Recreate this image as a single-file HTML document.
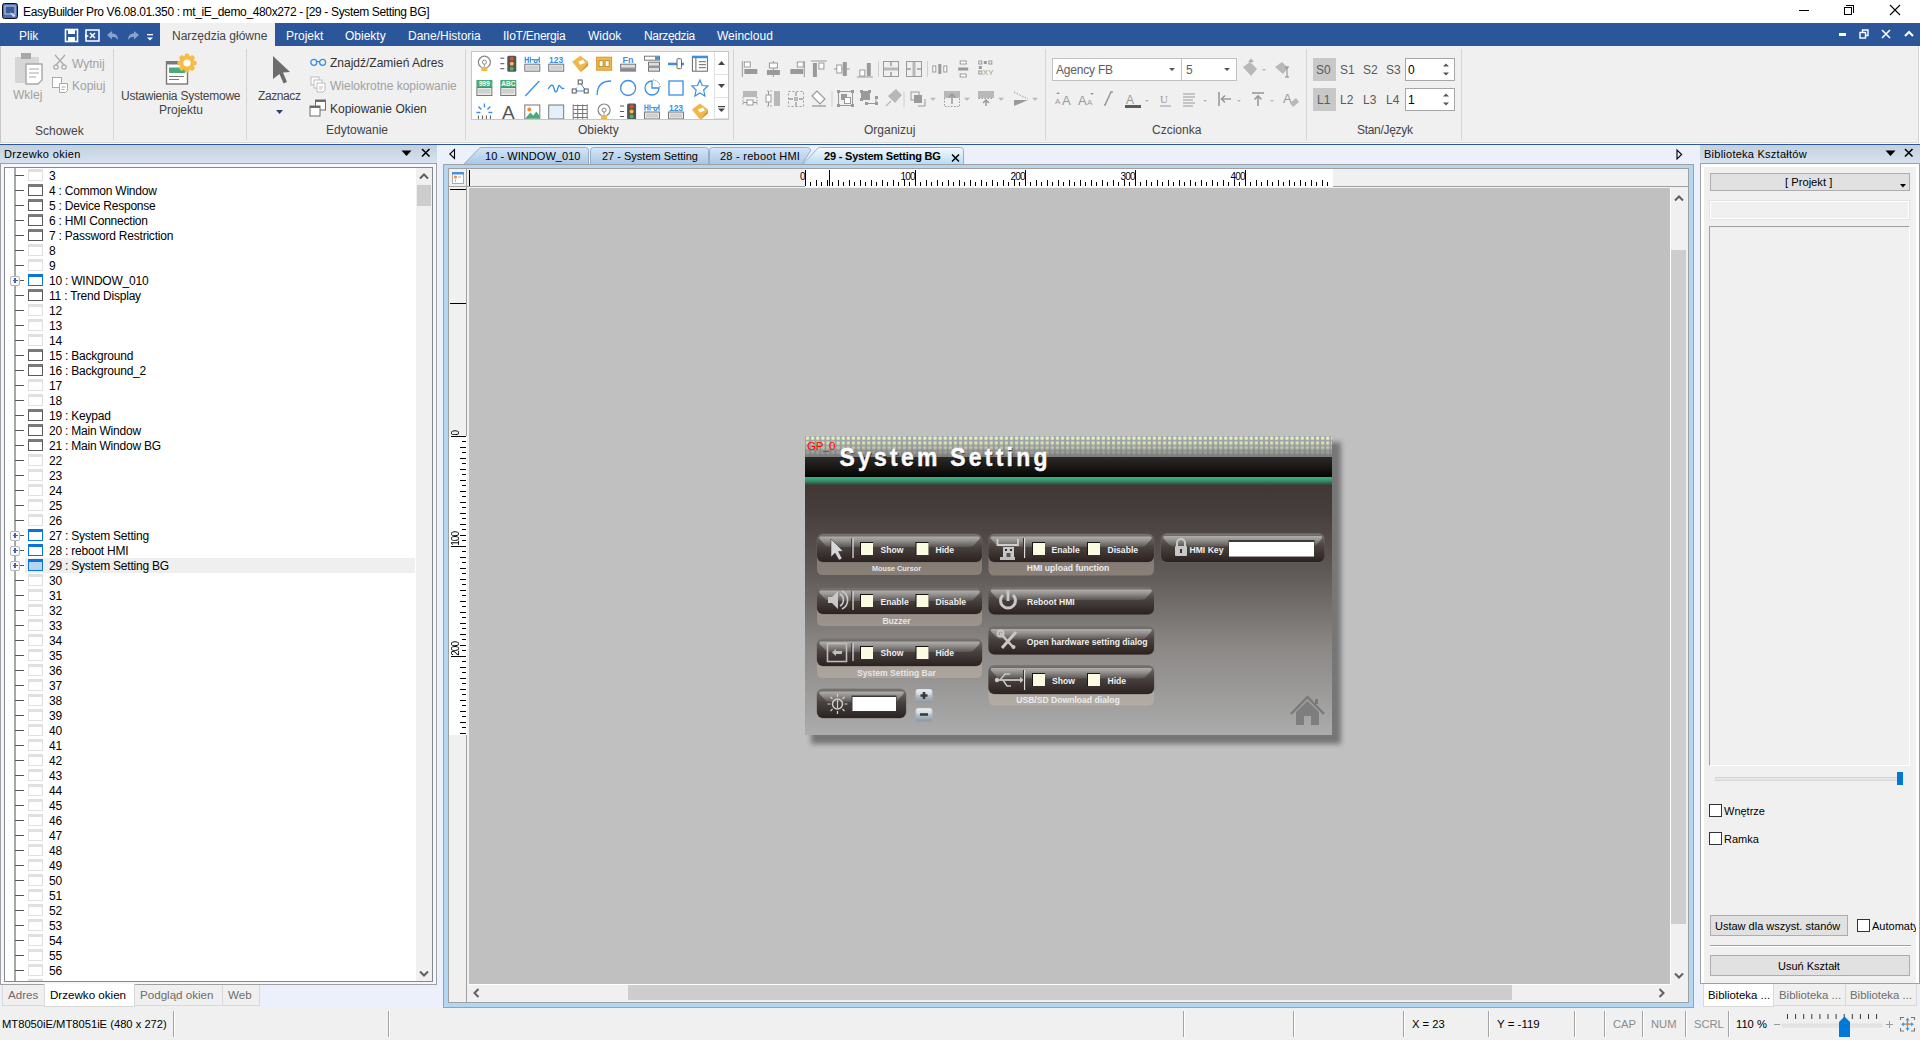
<!DOCTYPE html>
<html><head><meta charset="utf-8">
<style>
*{box-sizing:border-box;margin:0;padding:0}
html,body{width:1922px;height:1040px;overflow:hidden;background:#fff;font-family:"Liberation Sans",sans-serif;font-size:12px;color:#000;position:relative}
.a{position:absolute}
.t{position:absolute;white-space:nowrap;line-height:14px;font-size:12px}
svg{overflow:visible}
</style></head><body>
<!-- ===== TITLE BAR ===== -->
<div class="a" style="left:0;top:0;width:1922px;height:23px;background:#fff"></div>
<svg class="a" style="left:2px;top:3px" width="17" height="17" viewBox="0 0 17 17"><rect x="0.5" y="0.5" width="15" height="15" rx="2" fill="#4a6db0" stroke="#111"/><rect x="3" y="3" width="10" height="8" fill="#3a5a9a" stroke="#c8d0e0" stroke-width="1"/><path d="M8 9 L14 13 L11 14 Z" fill="#dde"/></svg>
<div class="t" style="left:23px;top:5px;font-size:12px;letter-spacing:-0.36px;color:#000">EasyBuilder Pro V6.08.01.350 : mt_iE_demo_480x272 - [29 - System Setting BG]</div>
<div class="a" style="left:1799px;top:10px;width:10px;height:1px;background:#000"></div>
<div class="a" style="left:1844px;top:7px;width:8px;height:8px;border:1px solid #000"></div>
<div class="a" style="left:1846px;top:5px;width:8px;height:8px;border-top:1px solid #000;border-right:1px solid #000"></div>
<svg class="a" style="left:1889px;top:4px" width="12" height="12"><path d="M1 1L11 11M11 1L1 11" stroke="#000" stroke-width="1.1"/></svg>
<!-- ===== MENU BAR ===== -->
<div class="a" style="left:0;top:23px;width:1920px;height:23px;background:#2b579a"></div>
<div class="a" style="left:160px;top:23px;width:115px;height:24px;background:#f0f0f0"></div>
<div class="t" style="left:19px;top:29px;color:#fff">Plik</div>
<svg class="a" style="left:65px;top:29px" width="13" height="13"><rect x="0.5" y="0.5" width="12" height="12" fill="none" stroke="#fff" stroke-width="1.6"/><rect x="3" y="1" width="7" height="4" fill="#fff"/><rect x="3" y="8" width="7" height="4" fill="#fff"/></svg>
<svg class="a" style="left:85px;top:29px" width="15" height="13"><rect x="1" y="1" width="13" height="11" fill="none" stroke="#fff" stroke-width="1.5"/><path d="M5 4L10 9M10 4L5 9" stroke="#fff" stroke-width="1.5"/><path d="M0 5L4 7L0 9Z" fill="#fff"/></svg>
<svg class="a" style="left:106px;top:30px" width="13" height="11"><path d="M1 5L6 1V3.5C10 3.5 12 6 12 10C10.5 7.5 9 7 6 7V9.5Z" fill="#8aa3cc"/></svg>
<svg class="a" style="left:127px;top:30px" width="13" height="11"><path d="M12 5L7 1V3.5C3 3.5 1 6 1 10C2.5 7.5 4 7 7 7V9.5Z" fill="#8aa3cc"/></svg>
<svg class="a" style="left:147px;top:33px" width="7" height="9"><rect x="0" y="1" width="6" height="1.3" fill="#fff"/><path d="M0 4.5H6L3 7.5Z" fill="#fff"/></svg>
<div class="t" style="left:172px;top:29px;color:#444">Narzędzia główne</div>
<div class="t" style="left:286px;top:29px;color:#fff">Projekt</div>
<div class="t" style="left:345px;top:29px;color:#fff">Obiekty</div>
<div class="t" style="left:408px;top:29px;color:#fff">Dane/Historia</div>
<div class="t" style="left:503px;top:29px;color:#fff;letter-spacing:-0.25px">IIoT/Energia</div>
<div class="t" style="left:588px;top:29px;color:#fff">Widok</div>
<div class="t" style="left:644px;top:29px;color:#fff;letter-spacing:-0.35px">Narzędzia</div>
<div class="t" style="left:717px;top:29px;color:#fff">Weincloud</div>
<div class="a" style="left:1839px;top:33px;width:7px;height:3px;background:#fff"></div>
<svg class="a" style="left:1859px;top:29px" width="10" height="10"><rect x="1" y="3.5" width="5.5" height="5.5" fill="none" stroke="#fff" stroke-width="1.4"/><path d="M3.5 3V1H9V6.5H7" fill="none" stroke="#fff" stroke-width="1.4"/></svg>
<svg class="a" style="left:1881px;top:29px" width="10" height="10"><path d="M1 1L9 9M9 1L1 9" stroke="#fff" stroke-width="1.6"/></svg>
<svg class="a" style="left:1904px;top:30px" width="10" height="8"><path d="M1 6L5 2L9 6" fill="none" stroke="#fff" stroke-width="2"/></svg>
<!-- ===== RIBBON ===== -->
<div class="a" style="left:0;top:46px;width:1919px;height:97px;background:#f0f0f0;border-left:1px solid #c8c8c8;border-right:1px solid #d4d4d4;border-bottom:1px solid #dadada"></div>
<div class="a" style="left:0;top:144px;width:1920px;height:1px;background:#2b579a"></div>
<!-- separators -->
<div class="a" style="left:113px;top:49px;width:1px;height:91px;background:#d5d5d5"></div>
<div class="a" style="left:246px;top:49px;width:1px;height:91px;background:#d5d5d5"></div>
<div class="a" style="left:465px;top:49px;width:1px;height:91px;background:#d5d5d5"></div>
<div class="a" style="left:733px;top:49px;width:1px;height:91px;background:#d5d5d5"></div>
<div class="a" style="left:1045px;top:49px;width:1px;height:91px;background:#d5d5d5"></div>
<div class="a" style="left:1306px;top:49px;width:1px;height:91px;background:#d5d5d5"></div>
<div class="a" style="left:1461px;top:49px;width:1px;height:91px;background:#d5d5d5"></div>
<!-- Schowek -->
<svg class="a" style="left:14px;top:53px" width="30" height="32"><rect x="1" y="4" width="24" height="26" rx="1" fill="#d6d6d6"/><rect x="7" y="0" width="10" height="6" fill="#a8a8a8"/><path d="M12 11H28V27L24 31H12Z" fill="#fff" stroke="#a8a8a8" stroke-width="1.4"/><path d="M15 16H25M15 20H25M15 24H22" stroke="#a8a8a8" stroke-width="1.2"/></svg>
<div class="t" style="left:13px;top:88px;color:#a0a0a0">Wklej</div>
<svg class="a" style="left:53px;top:54px" width="15" height="16"><path d="M2 1L11 11M12 1L3 11" stroke="#aaa" stroke-width="1.3"/><circle cx="3" cy="13" r="2.2" fill="none" stroke="#aaa" stroke-width="1.2"/><circle cx="11" cy="13" r="2.2" fill="none" stroke="#aaa" stroke-width="1.2"/></svg>
<div class="t" style="left:72px;top:57px;color:#a0a0a0">Wytnij</div>
<svg class="a" style="left:52px;top:77px" width="17" height="17"><rect x="0.5" y="0.5" width="9" height="10" fill="#fff" stroke="#aaa"/><path d="M7.5 6.5H15.5V13.5L13.5 15.5H7.5Z" fill="#fff" stroke="#aaa"/><path d="M9.5 10H13.5M9.5 12.5H12.5" stroke="#aaa"/></svg>
<div class="t" style="left:72px;top:79px;color:#a0a0a0">Kopiuj</div>
<div class="t" style="left:35px;top:124px;color:#444">Schowek</div>
<!-- Ustawienia -->
<svg class="a" style="left:165px;top:53px" width="32" height="32"><rect x="1.5" y="9" width="21" height="22" fill="#fff" stroke="#7a7a7a" stroke-width="1.4"/><rect x="1" y="8" width="22" height="3.5" fill="#7a7a7a"/><rect x="4" y="14.5" width="16" height="5.5" fill="#4aaa7a"/><path d="M4 23.5H19M4 26.5H14" stroke="#7a7a7a" stroke-width="1"/><g transform="translate(22 10)"><circle r="7.3" fill="#f5bd44"/><g fill="#f5bd44"><rect x="-2.3" y="-9.6" width="4.6" height="19.2" rx="1.5"/><rect x="-2.3" y="-9.6" width="4.6" height="19.2" rx="1.5" transform="rotate(45)"/><rect x="-2.3" y="-9.6" width="4.6" height="19.2" rx="1.5" transform="rotate(90)"/><rect x="-2.3" y="-9.6" width="4.6" height="19.2" rx="1.5" transform="rotate(135)"/></g><circle r="3.6" fill="#fff"/></g></svg>
<div class="t" style="left:121px;top:89px;color:#444;letter-spacing:-0.24px">Ustawienia Systemowe</div>
<div class="t" style="left:159px;top:103px;color:#444">Projektu</div>
<!-- Edytowanie -->
<svg class="a" style="left:272px;top:55px" width="20" height="30"><path d="M1 1L18 17L11 17.5L15 27L11.5 28.5L7.5 19L1 24Z" fill="#6d6d6d"/></svg>
<div class="t" style="left:258px;top:89px;color:#444;letter-spacing:-0.4px">Zaznacz</div>
<svg class="a" style="left:276px;top:110px" width="8" height="5"><path d="M0 0H7L3.5 4Z" fill="#2b3f6a"/></svg>
<svg class="a" style="left:310px;top:58px" width="17" height="9"><circle cx="3.8" cy="4.3" r="3" fill="none" stroke="#3a8ee6" stroke-width="1.3"/><circle cx="12.6" cy="4.3" r="3" fill="none" stroke="#3a8ee6" stroke-width="1.3"/><path d="M6.8 3.6H9.6" stroke="#777" stroke-width="1.2"/></svg>
<div class="t" style="left:330px;top:56px;color:#333">Znajdź/Zamień Adres</div>
<svg class="a" style="left:310px;top:76px" width="17" height="17"><rect x="1" y="1" width="8" height="8" fill="#fff" stroke="#bbb"/><rect x="4" y="4" width="8" height="8" fill="#fff" stroke="#bbb"/><path d="M7 7H15V14L13 16H7Z" fill="#fff" stroke="#bbb"/><path d="M9 11H13M9 13H12" stroke="#bbb"/></svg>
<div class="t" style="left:330px;top:79px;color:#a0a0a0">Wielokrotne kopiowanie</div>
<svg class="a" style="left:309px;top:99px" width="18" height="18"><rect x="6.5" y="1" width="10" height="10" fill="#fff" stroke="#6b6b6b"/><rect x="6.5" y="1" width="10" height="2" fill="#6b6b6b"/><rect x="1" y="7" width="10" height="10" fill="#fff" stroke="#6b6b6b"/><rect x="1" y="7" width="10" height="2" fill="#6b6b6b"/></svg>
<div class="t" style="left:330px;top:102px;color:#333">Kopiowanie Okien</div>
<div class="t" style="left:326px;top:123px;color:#444">Edytowanie</div>
<div class="a" style="left:471px;top:51px;width:258px;height:69px;background:#fff;border:1px solid #c6c6c6"></div>
<div class="a" style="left:714px;top:52px;width:1px;height:67px;background:#e2e2e2"></div>
<div class="a" style="left:715px;top:52px;width:13px;height:23px;border-bottom:1px solid #e2e2e2"></div>
<div class="a" style="left:715px;top:76px;width:13px;height:22px;border-bottom:1px solid #e2e2e2"></div>
<div class="a" style="left:715px;top:99px;width:13px;height:20px;border-bottom:1px solid #e2e2e2"></div>
<svg class="a" style="left:718px;top:61px" width="7" height="4"><path d="M0 4H7L3.5 0Z" fill="#444"/></svg>
<svg class="a" style="left:718px;top:84px" width="7" height="4"><path d="M0 0H7L3.5 4Z" fill="#444"/></svg>
<svg class="a" style="left:718px;top:106px" width="7" height="6"><rect x="0" y="0" width="7" height="1.2" fill="#444"/><path d="M0 2.5H7L3.5 6Z" fill="#444"/></svg>
<div class="a" style="left:472px;top:52px;width:242px;height:67px;overflow:hidden"><svg class="a" style="left:-472px;top:-52px" width="1000" height="200"><g transform="translate(477.4 55.7)"><circle cx="7" cy="6.5" r="6" fill="#fff" stroke="#888" stroke-width="1.2"/><circle cx="7" cy="6.5" r="2" fill="none" stroke="#888"/><path d="M7 8.5V11" stroke="#888"/><rect x="4" y="11.5" width="6" height="4" fill="#f0b84a"/></g><g transform="translate(500.3 55.7)"><rect x="7" y="0" width="9" height="16" rx="1.5" fill="#555"/><circle cx="11.5" cy="3" r="2" fill="#e9463a"/><circle cx="11.5" cy="8" r="2" fill="#f5bd44"/><circle cx="11.5" cy="13" r="2" fill="#4caf7a"/><path d="M0 2.5H4M0 8H4M0 13H4" stroke="#555" stroke-width="1"/></g><g transform="translate(524.3 55.7)"><path d="M1 1V7M1 4H4M4 1V7M6 1V7M7 4H10M11.5 4a1.5 1.5 0 1 0 0.01 0M13 4H15M15 1V7" stroke="#3a8ee6" stroke-width="1.2" fill="none"/><rect x="0.5" y="8.5" width="15" height="7" fill="#e8e8e8" stroke="#777"/><rect x="2" y="10" width="12" height="4" fill="#cfcfcf"/></g><g transform="translate(548.2 55.7)"><text x="8" y="7" font-size="8.5" font-weight="bold" text-anchor="middle" fill="#3a8ee6" font-family="Liberation Sans">123</text><rect x="0.5" y="8.5" width="15" height="7" fill="#e8e8e8" stroke="#777"/><rect x="2" y="10" width="12" height="4" fill="#cfcfcf"/></g><g transform="translate(572.2 55.7)"><path d="M0 6L8 0L16 6L8 16Z" fill="#f0b84a"/><path d="M8 16L16 6V10L9 16Z" fill="#d49a30"/><path d="M6 6L11 4L13 7L8 9Z" fill="#fff"/></g><g transform="translate(596.1 55.7)"><rect x="0.5" y="1.5" width="15" height="13" fill="#f0b84a" stroke="#d49a30"/><rect x="3" y="5" width="4" height="6" fill="#fff" stroke="#b07d20" stroke-width="0.8"/><rect x="9" y="5" width="4" height="6" fill="#fff" stroke="#b07d20" stroke-width="0.8"/></g><g transform="translate(620.1 55.7)"><text x="8" y="7" font-size="9" font-weight="bold" text-anchor="middle" fill="#3a8ee6" font-family="Liberation Sans">Fn</text><rect x="0.5" y="8.5" width="15" height="4" fill="#ddd" stroke="#777"/><rect x="0" y="13" width="16" height="3" fill="#888"/></g><g transform="translate(644.0 55.7)"><rect x="0.5" y="0.5" width="15" height="4" fill="#fff" stroke="#777"/><rect x="11" y="1" width="4" height="3" fill="#3a8ee6"/><rect x="4.5" y="6.5" width="11" height="4" fill="#ddd" stroke="#777"/><rect x="4.5" y="11.5" width="11" height="4" fill="#ddd" stroke="#777"/></g><g transform="translate(668.0 55.7)"><rect x="0" y="7" width="16" height="2.5" fill="#3a8ee6"/><rect x="9" y="3" width="4.5" height="10" rx="1" fill="#fff" stroke="#666"/></g><g transform="translate(691.9 55.7)"><rect x="0.5" y="1.5" width="15" height="14" fill="#fff" stroke="#666"/><rect x="0" y="0" width="16" height="2.5" fill="#3a8ee6"/><path d="M4 2V15" stroke="#666"/><path d="M7 6H14M7 9H14M7 12H14" stroke="#666"/></g><g transform="translate(476.4 80)"><rect x="0" y="0" width="16" height="7" fill="#4aaa7a"/><text x="8" y="6.3" font-size="6.5" font-weight="bold" text-anchor="middle" fill="#fff" font-family="Liberation Sans">999</text><rect x="0.5" y="7.5" width="15" height="8" fill="#e8e8e8" stroke="#777"/><rect x="2" y="9" width="12" height="4.5" fill="#cfcfcf"/></g><g transform="translate(500.3 80)"><rect x="0" y="0" width="16" height="7" fill="#4aaa7a"/><text x="8" y="6.3" font-size="6.5" font-weight="bold" text-anchor="middle" fill="#fff" font-family="Liberation Sans">ABC</text><rect x="0.5" y="7.5" width="15" height="8" fill="#e8e8e8" stroke="#777"/><rect x="2" y="9" width="12" height="4.5" fill="#cfcfcf"/></g><path d="M525.3 96L539.3 81" stroke="#3a8ee6" stroke-width="1.3" fill="none"/><path d="M548.2 89C551.2 84 553.2 84 554.2 89 S557.2 92 558.2 87 S561.2 91 564.2 88" stroke="#3a8ee6" stroke-width="1.3" fill="none"/><path d="M574.2 91L580.2 83L586.2 91Z" stroke="#3a8ee6" fill="none" stroke-width="1"/><path d="M580.2 83L574.2 91" stroke="#fff"/><rect x="572.2" y="89" width="4" height="4" fill="#fff" stroke="#555"/><rect x="578.2" y="80" width="4" height="4" fill="#fff" stroke="#555"/><rect x="584.2" y="89" width="4" height="4" fill="#fff" stroke="#555"/><path d="M597.1 95C597.1 86 602.1 81 611.1 81" stroke="#3a8ee6" stroke-width="1.3" fill="none"/><circle cx="628.1" cy="88" r="7.5" stroke="#3a8ee6" stroke-width="1.3" fill="none"/><path d="M652.0 81A7 7 0 1 0 659.0 88H652.0Z" stroke="#3a8ee6" stroke-width="1.3" fill="none"/><path d="M653.0 80A7 7 0 0 1 660.0 87" stroke="#555" stroke-dasharray="1 1.5" fill="none"/><rect x="669.0" y="81" width="14" height="14" stroke="#3a8ee6" stroke-width="1.3" fill="none"/><path d="M699.9 80L702.3 85.5L707.9 86L703.6999999999999 90L704.9 96L699.9 93L694.9 96L696.1 90L691.9 86L697.5 85.5Z" stroke="#3a8ee6" stroke-width="1.2" fill="none"/><path d="M484.4 103.5V107.5M478.4 106.5L481.4 109.5M490.4 106.5L487.4 109.5M476.4 112.5H480.4M488.4 112.5H492.4" stroke="#3a8ee6" stroke-width="1.3"/><path d="M478.4 115.5V119.5M482.4 115.5V119.5M486.4 115.5V119.5M490.4 115.5V119.5" stroke="#555" stroke-width="1"/><text x="508.3" y="118.5" font-size="19" text-anchor="middle" fill="#555" font-family="Liberation Sans">A</text><rect x="524.8" y="105.0" width="15" height="14" fill="#fff" stroke="#777"/><circle cx="529.3" cy="109.5" r="2" fill="#f08a3a"/><path d="M525.3 118.5L530.3 112.5L533.3 115.5L536.3 111.5L539.3 115.5V118.5Z" fill="#4aaa7a"/><rect x="548.7" y="105.0" width="15" height="14" fill="#e3f0fb" stroke="#777"/><path d="M573.2 105.5H587.2M573.2 109.5H587.2M573.2 113.5H587.2M573.2 117.5H587.2M573.2 104.5V119.5M577.7 104.5V119.5M582.7 104.5V119.5M587.2 104.5V119.5" stroke="#777" stroke-width="1"/><g transform="translate(597.1 103.5)"><circle cx="7" cy="6.5" r="6" fill="#fff" stroke="#888" stroke-width="1.2"/><circle cx="7" cy="6.5" r="2" fill="none" stroke="#888"/><path d="M7 8.5V11" stroke="#888"/><rect x="4" y="11.5" width="6" height="4" fill="#f0b84a"/></g><g transform="translate(620.1 103.5)"><rect x="7" y="0" width="9" height="16" rx="1.5" fill="#555"/><circle cx="11.5" cy="3" r="2" fill="#e9463a"/><circle cx="11.5" cy="8" r="2" fill="#f5bd44"/><circle cx="11.5" cy="13" r="2" fill="#4caf7a"/><path d="M0 2.5H4M0 8H4M0 13H4" stroke="#555" stroke-width="1"/></g><g transform="translate(644.0 103.5)"><path d="M1 1V7M1 4H4M4 1V7M6 1V7M7 4H10M11.5 4a1.5 1.5 0 1 0 0.01 0M13 4H15M15 1V7" stroke="#3a8ee6" stroke-width="1.2" fill="none"/><rect x="0.5" y="8.5" width="15" height="7" fill="#e8e8e8" stroke="#777"/><rect x="2" y="10" width="12" height="4" fill="#cfcfcf"/></g><g transform="translate(668.0 103.5)"><text x="8" y="7" font-size="8.5" font-weight="bold" text-anchor="middle" fill="#3a8ee6" font-family="Liberation Sans">123</text><rect x="0.5" y="8.5" width="15" height="7" fill="#e8e8e8" stroke="#777"/><rect x="2" y="10" width="12" height="4" fill="#cfcfcf"/></g><g transform="translate(691.9 103.5)"><path d="M0 6L8 0L16 6L8 16Z" fill="#f0b84a"/><path d="M8 16L16 6V10L9 16Z" fill="#d49a30"/><path d="M6 6L11 4L13 7L8 9Z" fill="#fff"/></g></svg></div>
<div class="t" style="left:578px;top:123px;color:#444">Obiekty</div>
<svg class="a" style="left:0;top:0" width="1100" height="150"><path d="M742.3 61V77" stroke="#9a9a9a"/><rect x="744.3" y="62" width="6" height="5" fill="#fff" stroke="#9a9a9a"/><rect x="744.3" y="69" width="13" height="5" fill="#9a9a9a"/><path d="M773.4 61V77" stroke="#9a9a9a"/><rect x="769.4" y="63" width="8" height="5" fill="#fff" stroke="#9a9a9a"/><rect x="766.9" y="70" width="13" height="5" fill="#9a9a9a"/><path d="M804.3 61V77" stroke="#9a9a9a"/><rect x="797.3" y="62" width="6" height="5" fill="#fff" stroke="#9a9a9a"/><rect x="790.3" y="69" width="13" height="5" fill="#9a9a9a"/><path d="M810.9 61H826.9" stroke="#9a9a9a"/><rect x="812.9" y="63" width="4" height="14" fill="#9a9a9a"/><rect x="818.9" y="63" width="5" height="6" fill="#fff" stroke="#9a9a9a"/><path d="M833.8 69H849.8" stroke="#9a9a9a"/><rect x="836.8" y="65" width="5" height="8" fill="#fff" stroke="#9a9a9a"/><rect x="842.8" y="62" width="4" height="14" fill="#9a9a9a"/><path d="M856.8 77H872.8" stroke="#9a9a9a"/><rect x="859.8" y="70" width="5" height="6" fill="#fff" stroke="#9a9a9a"/><rect x="866.8" y="63" width="4" height="13" fill="#9a9a9a"/><rect x="883.5" y="61.5" width="15" height="15" fill="none" stroke="#9a9a9a"/><rect x="884" y="67.5" width="14" height="3" fill="#b8b8b8"/><path d="M891 62V66M891 72V76" stroke="#9a9a9a" stroke-width="1.5"/><rect x="906.5" y="61.5" width="15" height="15" fill="none" stroke="#9a9a9a"/><rect x="912.5" y="62" width="3" height="14" fill="#b8b8b8"/><path d="M907 69H911M917 69H921" stroke="#9a9a9a" stroke-width="1.5"/><rect x="932.8" y="66" width="3" height="6" fill="#fff" stroke="#9a9a9a"/><rect x="938.3" y="64" width="3" height="10" fill="#9a9a9a"/><rect x="943.8" y="66" width="3" height="6" fill="#fff" stroke="#9a9a9a"/><rect x="960.2" y="61" width="6" height="3" fill="#fff" stroke="#9a9a9a"/><rect x="958.2" y="67.5" width="10" height="3" fill="#9a9a9a"/><rect x="960.2" y="74" width="6" height="3" fill="#fff" stroke="#9a9a9a"/><rect x="978.8" y="61" width="3" height="3" fill="none" stroke="#9a9a9a"/><rect x="983.8" y="61" width="3" height="3" fill="#9a9a9a"/><rect x="988.8" y="61" width="3" height="3" fill="none" stroke="#9a9a9a"/><rect x="978.8" y="66" width="3" height="3" fill="#9a9a9a"/><rect x="978.8" y="71" width="3" height="3" fill="none" stroke="#9a9a9a"/><text x="982.8" y="75" font-size="8" fill="#9a9a9a" font-family="Liberation Sans">XY</text><path d="M878.5 61V77M927.5 61V77" stroke="#d0d0d0"/><rect x="743" y="91" width="14" height="6" fill="#b8b8b8"/><path d="M743 97V106M757 97V106" stroke="#9a9a9a" stroke-dasharray="1.5 1.5"/><rect x="747" y="100" width="6" height="5" fill="#fff" stroke="#9a9a9a"/><path d="M743 102.5H747M753 102.5H757" stroke="#9a9a9a"/><rect x="774" y="91" width="6" height="15" fill="#b8b8b8"/><path d="M767 91H772M767 106H772" stroke="#9a9a9a" stroke-dasharray="1.5 1.5"/><rect x="766" y="95" width="5" height="7" fill="#fff" stroke="#9a9a9a"/><path d="M768.5 91V95M768.5 102V106" stroke="#9a9a9a"/><rect x="788.5" y="91.5" width="15" height="15" fill="none" stroke="#9a9a9a" stroke-dasharray="2 2"/><rect x="794" y="97" width="4" height="4" fill="#b8b8b8"/><path d="M796 92V96M796 102V106M789 99H793M799 99H803" stroke="#9a9a9a" stroke-width="1.3"/><path d="M812 96L817 91L825 99L820 104Z" fill="#fff" stroke="#9a9a9a" stroke-width="1.2"/><path d="M812 106H826" stroke="#9a9a9a" stroke-width="1.3"/><path d="M832 91V107M904 91V107" stroke="#d0d0d0"/><rect x="838.5" y="91.5" width="14" height="14" fill="none" stroke="#9a9a9a"/><rect x="841" y="94" width="6" height="6" fill="#9a9a9a"/><rect x="844.5" y="97.5" width="6" height="6" fill="#fff" stroke="#9a9a9a"/><g fill="#9a9a9a"><rect x="837" y="90" width="3" height="3"/><rect x="851" y="90" width="3" height="3"/><rect x="837" y="104" width="3" height="3"/><rect x="851" y="104" width="3" height="3"/></g><rect x="861" y="91" width="9" height="9" fill="#9a9a9a"/><path d="M866 103.5H876V97" fill="none" stroke="#9a9a9a"/><g fill="#9a9a9a"><rect x="860" y="90" width="3" height="3"/><rect x="868" y="90" width="3" height="3"/><rect x="860" y="98" width="3" height="3"/><rect x="865" y="102" width="3" height="3"/><rect x="875" y="102" width="3" height="3"/><rect x="875" y="96" width="3" height="3"/></g><path d="M886 106L891 101M889 96L896 90L901 95L895 102Z" stroke="#b8b8b8" fill="#b8b8b8" stroke-width="1.4"/><rect x="911" y="92" width="8" height="8" fill="none" stroke="#9a9a9a"/><rect x="914" y="95" width="8" height="8" fill="#9a9a9a"/><path d="M918 106H925V99" fill="none" stroke="#9a9a9a"/><path d="M930 97.7H936L933 100.7Z" fill="#b8b8b8"/><rect x="944" y="91" width="16" height="7" fill="#b8b8b8"/><path d="M944.5 98V106.5H959.5V98" fill="none" stroke="#9a9a9a" stroke-dasharray="1.5 1.5"/><path d="M952 104V94M948.5 97.5L952 94L955.5 97.5" stroke="#9a9a9a" stroke-width="1.5" fill="none"/><path d="M964 97.7H970L967 100.7Z" fill="#b8b8b8"/><rect x="978" y="91" width="16" height="7" fill="#b8b8b8"/><path d="M978.5 98.5H993.5" stroke="#9a9a9a" stroke-dasharray="1.5 1.5"/><path d="M986 106V101M983 103L986 100L989 103" stroke="#9a9a9a" stroke-width="1.5" fill="none"/><path d="M998 97.7H1004L1001 100.7Z" fill="#b8b8b8"/><path d="M1014 106L1028 100H1014Z" fill="#9a9a9a"/><path d="M1014 92L1028 99" stroke="#9a9a9a" stroke-dasharray="1.5 1.5"/><path d="M1032 97.7H1038L1035 100.7Z" fill="#b8b8b8"/></svg>
<div class="t" style="left:864px;top:123px;color:#444">Organizuj</div>
<div class="a" style="left:1052px;top:58px;width:130px;height:23px;background:#fff;border:1px solid #c2c2c2"></div>
<div class="a" style="left:1181px;top:58px;width:56px;height:23px;background:#fff;border:1px solid #c2c2c2"></div>
<div class="t" style="left:1056px;top:63px;color:#5e5e5e;letter-spacing:-0.2px">Agency FB</div>
<div class="t" style="left:1186px;top:63px;color:#5e5e5e">5</div>
<svg class="a" style="left:0;top:0" width="1400" height="150"><path d="M1169 68H1175L1172 71Z" fill="#555"/><path d="M1224 68H1230L1227 71Z" fill="#555"/><path d="M1243 67L1250 62L1257 69L1251 76Z" fill="#b8b8b8"/><path d="M1249 62L1251 60L1253 62" stroke="#b8b8b8" stroke-width="2"/><path d="M1262 69H1266L1264 71Z" fill="#b8b8b8"/><path d="M1275 67L1282 62L1288 68L1283 74Z" fill="#b8b8b8"/><path d="M1287 67V77M1285 67H1289M1285 77H1289" stroke="#888"/><text x="1055" y="104" font-size="8" fill="#9a9a9a" font-family="Liberation Sans">A</text><text x="1062" y="105" font-size="13" fill="#9a9a9a" font-family="Liberation Sans">A</text><path d="M1056 94L1058 92L1060 94" fill="#9a9a9a"/><text x="1078" y="105" font-size="13" fill="#9a9a9a" font-family="Liberation Sans">A</text><text x="1087" y="105" font-size="8" fill="#9a9a9a" font-family="Liberation Sans">A</text><path d="M1090 93L1092 95L1094 93" fill="#9a9a9a"/><path d="M1105 105L1111 92M1106 105H1104M1110 92H1113" stroke="#9a9a9a" stroke-width="1.6"/><text x="1126" y="104" font-size="12" fill="#9a9a9a" font-family="Liberation Sans">A</text><rect x="1125" y="105" width="16" height="3" fill="#5a5a5a"/><path d="M1145 100H1149L1147 102Z" fill="#b8b8b8"/><text x="1160" y="103" font-size="11" fill="#9a9a9a" font-family="Liberation Serif">U</text><path d="M1160 106H1171" stroke="#9a9a9a"/><path d="M1183 94H1195M1183 97H1195M1183 100H1193M1183 103H1195M1183 106H1193" stroke="#9a9a9a"/><path d="M1203 100H1207L1205 102Z" fill="#b8b8b8"/><path d="M1219 92V106" stroke="#9a9a9a" stroke-width="1.6"/><path d="M1222 99H1231M1225 95.5L1221.5 99L1225 102.5" stroke="#9a9a9a" stroke-width="1.6" fill="none"/><path d="M1237 100H1241L1239 102Z" fill="#b8b8b8"/><path d="M1252 93H1264" stroke="#9a9a9a" stroke-width="1.6"/><path d="M1258 106V96M1254.5 99.5L1258 96L1261.5 99.5" stroke="#9a9a9a" stroke-width="1.6" fill="none"/><path d="M1270 100H1274L1272 102Z" fill="#b8b8b8"/><text x="1283" y="103" font-size="13" fill="#9a9a9a" font-family="Liberation Sans">A</text><path d="M1290 103L1296 98L1299 102L1293 107Z" fill="#b8b8b8"/></svg>
<div class="t" style="left:1152px;top:123px;color:#444">Czcionka</div>
<div class="a" style="left:1313px;top:58px;width:23px;height:23px;background:#c8c8c8"></div>
<div class="a" style="left:1313px;top:88px;width:23px;height:23px;background:#c8c8c8"></div>
<div class="t" style="left:1316px;top:63px;color:#5a5a5a">S0</div>
<div class="t" style="left:1340px;top:63px;color:#5a5a5a">S1</div>
<div class="t" style="left:1363px;top:63px;color:#5a5a5a">S2</div>
<div class="t" style="left:1386px;top:63px;color:#5a5a5a">S3</div>
<div class="t" style="left:1317px;top:93px;color:#5a5a5a">L1</div>
<div class="t" style="left:1340px;top:93px;color:#5a5a5a">L2</div>
<div class="t" style="left:1363px;top:93px;color:#5a5a5a">L3</div>
<div class="t" style="left:1386px;top:93px;color:#5a5a5a">L4</div>
<div class="a" style="left:1405px;top:58px;width:50px;height:23px;background:#fff;border:1px solid #a6a6a6"></div>
<div class="t" style="left:1408px;top:63px;color:#000">0</div>
<svg class="a" style="left:1442px;top:62px" width="8" height="15"><path d="M1 4.5L4 1.5L7 4.5Z" fill="#555"/><path d="M1 10.5L4 13.5L7 10.5Z" fill="#555"/></svg>
<div class="a" style="left:1405px;top:88px;width:50px;height:23px;background:#fff;border:1px solid #a6a6a6"></div>
<div class="t" style="left:1408px;top:93px;color:#000">1</div>
<svg class="a" style="left:1442px;top:92px" width="8" height="15"><path d="M1 4.5L4 1.5L7 4.5Z" fill="#555"/><path d="M1 10.5L4 13.5L7 10.5Z" fill="#555"/></svg>
<div class="t" style="left:1357px;top:123px;color:#444;letter-spacing:-0.3px">Stan/Język</div><div class="a" style="left:0;top:145px;width:1920px;height:863px;background:#ecf0fa"></div>
<div class="a" style="left:0;top:145px;width:437px;height:18px;background:linear-gradient(#c2d0df,#d6e2ee)"></div>
<div class="t" style="left:4px;top:147px;font-size:11px;letter-spacing:0.36px;color:#000">Drzewko okien</div>
<svg class="a" style="left:401px;top:150px" width="12" height="8"><path d="M0.5 0.5H10.5L5.5 6Z" fill="#000"/></svg>
<svg class="a" style="left:421px;top:148px" width="10" height="10"><path d="M1 1L8.5 8.5M8.5 1L1 8.5" stroke="#000" stroke-width="1.6"/></svg>
<div class="a" style="left:0;top:163px;width:437px;height:822px;background:#f5f7fd;border:1px solid #a0a0a0;border-left:1px solid #a0a0a0"></div>
<div class="a" style="left:4px;top:167px;width:429px;height:815px;background:#fff;border:1px solid #828790"></div>
<div class="a" style="left:416px;top:168px;width:16px;height:813px;background:#f0f0f0"></div>
<div class="a" style="left:417px;top:185px;width:14px;height:21px;background:#cdcdcd"></div>
<svg class="a" style="left:419px;top:173px" width="10" height="7"><path d="M1 5.5L5 1.5L9 5.5" fill="none" stroke="#606060" stroke-width="2"/></svg>
<svg class="a" style="left:419px;top:970px" width="10" height="7"><path d="M1 1.5L5 5.5L9 1.5" fill="none" stroke="#606060" stroke-width="2"/></svg>
<div class="a" style="left:5px;top:168px;width:411px;height:813px;overflow:hidden"><div class="a" style="left:9px;top:0;width:1.5px;height:813px;background:#a8a8a8"></div><div class="a" style="left:10px;top:7.0px;width:9px;height:1px;background:#555"></div><div class="a" style="left:23px;top:1.0px;width:15px;height:12px;background:#fff;border:1px solid #e0e0e0;border-top:3px solid #e0e0e0"></div><div class="t" style="left:44px;top:1px;line-height:15px;letter-spacing:-0.22px;color:#000">3</div><div class="a" style="left:10px;top:22.0px;width:9px;height:1px;background:#555"></div><div class="a" style="left:23px;top:16.0px;width:15px;height:12px;background:#fff;border:1px solid #5a5a5a;border-top:3px solid #7a7a7a"></div><div class="t" style="left:44px;top:16px;line-height:15px;letter-spacing:-0.22px;color:#000">4 : Common Window</div><div class="a" style="left:10px;top:37.0px;width:9px;height:1px;background:#555"></div><div class="a" style="left:23px;top:31.0px;width:15px;height:12px;background:#fff;border:1px solid #5a5a5a;border-top:3px solid #7a7a7a"></div><div class="t" style="left:44px;top:31px;line-height:15px;letter-spacing:-0.22px;color:#000">5 : Device Response</div><div class="a" style="left:10px;top:52.0px;width:9px;height:1px;background:#555"></div><div class="a" style="left:23px;top:46.0px;width:15px;height:12px;background:#fff;border:1px solid #5a5a5a;border-top:3px solid #7a7a7a"></div><div class="t" style="left:44px;top:46px;line-height:15px;letter-spacing:-0.22px;color:#000">6 : HMI Connection</div><div class="a" style="left:10px;top:67.0px;width:9px;height:1px;background:#555"></div><div class="a" style="left:23px;top:61.0px;width:15px;height:12px;background:#fff;border:1px solid #5a5a5a;border-top:3px solid #7a7a7a"></div><div class="t" style="left:44px;top:61px;line-height:15px;letter-spacing:-0.22px;color:#000">7 : Password Restriction</div><div class="a" style="left:10px;top:82.0px;width:9px;height:1px;background:#555"></div><div class="a" style="left:23px;top:76.0px;width:15px;height:12px;background:#fff;border:1px solid #e0e0e0;border-top:3px solid #e0e0e0"></div><div class="t" style="left:44px;top:76px;line-height:15px;letter-spacing:-0.22px;color:#000">8</div><div class="a" style="left:10px;top:97.0px;width:9px;height:1px;background:#555"></div><div class="a" style="left:23px;top:91.0px;width:15px;height:12px;background:#fff;border:1px solid #e0e0e0;border-top:3px solid #e0e0e0"></div><div class="t" style="left:44px;top:91px;line-height:15px;letter-spacing:-0.22px;color:#000">9</div><div class="a" style="left:10px;top:112.0px;width:9px;height:1px;background:#555"></div><div class="a" style="left:5px;top:107.5px;width:10px;height:10px;background:#fafafa;border:1.5px solid #b8b8b8;border-radius:2px"></div><div class="a" style="left:7.5px;top:111.8px;width:5px;height:1.4px;background:#4a5fa8"></div><div class="a" style="left:9.3px;top:110.0px;width:1.4px;height:5px;background:#4a5fa8"></div><div class="a" style="left:23px;top:106.0px;width:15px;height:12px;background:#fff;border:1px solid #0a74da;border-top:3px solid #0a74da"></div><div class="t" style="left:44px;top:106px;line-height:15px;letter-spacing:-0.22px;color:#000">10 : WINDOW_010</div><div class="a" style="left:10px;top:127.0px;width:9px;height:1px;background:#555"></div><div class="a" style="left:23px;top:121.0px;width:15px;height:12px;background:#fff;border:1px solid #5a5a5a;border-top:3px solid #7a7a7a"></div><div class="t" style="left:44px;top:121px;line-height:15px;letter-spacing:-0.22px;color:#000">11 : Trend Display</div><div class="a" style="left:10px;top:142.0px;width:9px;height:1px;background:#555"></div><div class="a" style="left:23px;top:136.0px;width:15px;height:12px;background:#fff;border:1px solid #e0e0e0;border-top:3px solid #e0e0e0"></div><div class="t" style="left:44px;top:136px;line-height:15px;letter-spacing:-0.22px;color:#000">12</div><div class="a" style="left:10px;top:157.0px;width:9px;height:1px;background:#555"></div><div class="a" style="left:23px;top:151.0px;width:15px;height:12px;background:#fff;border:1px solid #e0e0e0;border-top:3px solid #e0e0e0"></div><div class="t" style="left:44px;top:151px;line-height:15px;letter-spacing:-0.22px;color:#000">13</div><div class="a" style="left:10px;top:172.0px;width:9px;height:1px;background:#555"></div><div class="a" style="left:23px;top:166.0px;width:15px;height:12px;background:#fff;border:1px solid #e0e0e0;border-top:3px solid #e0e0e0"></div><div class="t" style="left:44px;top:166px;line-height:15px;letter-spacing:-0.22px;color:#000">14</div><div class="a" style="left:10px;top:187.0px;width:9px;height:1px;background:#555"></div><div class="a" style="left:23px;top:181.0px;width:15px;height:12px;background:#fff;border:1px solid #5a5a5a;border-top:3px solid #7a7a7a"></div><div class="t" style="left:44px;top:181px;line-height:15px;letter-spacing:-0.22px;color:#000">15 : Background</div><div class="a" style="left:10px;top:202.0px;width:9px;height:1px;background:#555"></div><div class="a" style="left:23px;top:196.0px;width:15px;height:12px;background:#fff;border:1px solid #5a5a5a;border-top:3px solid #7a7a7a"></div><div class="t" style="left:44px;top:196px;line-height:15px;letter-spacing:-0.22px;color:#000">16 : Background_2</div><div class="a" style="left:10px;top:217.0px;width:9px;height:1px;background:#555"></div><div class="a" style="left:23px;top:211.0px;width:15px;height:12px;background:#fff;border:1px solid #e0e0e0;border-top:3px solid #e0e0e0"></div><div class="t" style="left:44px;top:211px;line-height:15px;letter-spacing:-0.22px;color:#000">17</div><div class="a" style="left:10px;top:232.0px;width:9px;height:1px;background:#555"></div><div class="a" style="left:23px;top:226.0px;width:15px;height:12px;background:#fff;border:1px solid #e0e0e0;border-top:3px solid #e0e0e0"></div><div class="t" style="left:44px;top:226px;line-height:15px;letter-spacing:-0.22px;color:#000">18</div><div class="a" style="left:10px;top:247.0px;width:9px;height:1px;background:#555"></div><div class="a" style="left:23px;top:241.0px;width:15px;height:12px;background:#fff;border:1px solid #5a5a5a;border-top:3px solid #7a7a7a"></div><div class="t" style="left:44px;top:241px;line-height:15px;letter-spacing:-0.22px;color:#000">19 : Keypad</div><div class="a" style="left:10px;top:262.0px;width:9px;height:1px;background:#555"></div><div class="a" style="left:23px;top:256.0px;width:15px;height:12px;background:#fff;border:1px solid #5a5a5a;border-top:3px solid #7a7a7a"></div><div class="t" style="left:44px;top:256px;line-height:15px;letter-spacing:-0.22px;color:#000">20 : Main Window</div><div class="a" style="left:10px;top:277.0px;width:9px;height:1px;background:#555"></div><div class="a" style="left:23px;top:271.0px;width:15px;height:12px;background:#fff;border:1px solid #5a5a5a;border-top:3px solid #7a7a7a"></div><div class="t" style="left:44px;top:271px;line-height:15px;letter-spacing:-0.22px;color:#000">21 : Main Window BG</div><div class="a" style="left:10px;top:292.0px;width:9px;height:1px;background:#555"></div><div class="a" style="left:23px;top:286.0px;width:15px;height:12px;background:#fff;border:1px solid #e0e0e0;border-top:3px solid #e0e0e0"></div><div class="t" style="left:44px;top:286px;line-height:15px;letter-spacing:-0.22px;color:#000">22</div><div class="a" style="left:10px;top:307.0px;width:9px;height:1px;background:#555"></div><div class="a" style="left:23px;top:301.0px;width:15px;height:12px;background:#fff;border:1px solid #e0e0e0;border-top:3px solid #e0e0e0"></div><div class="t" style="left:44px;top:301px;line-height:15px;letter-spacing:-0.22px;color:#000">23</div><div class="a" style="left:10px;top:322.0px;width:9px;height:1px;background:#555"></div><div class="a" style="left:23px;top:316.0px;width:15px;height:12px;background:#fff;border:1px solid #e0e0e0;border-top:3px solid #e0e0e0"></div><div class="t" style="left:44px;top:316px;line-height:15px;letter-spacing:-0.22px;color:#000">24</div><div class="a" style="left:10px;top:337.0px;width:9px;height:1px;background:#555"></div><div class="a" style="left:23px;top:331.0px;width:15px;height:12px;background:#fff;border:1px solid #e0e0e0;border-top:3px solid #e0e0e0"></div><div class="t" style="left:44px;top:331px;line-height:15px;letter-spacing:-0.22px;color:#000">25</div><div class="a" style="left:10px;top:352.0px;width:9px;height:1px;background:#555"></div><div class="a" style="left:23px;top:346.0px;width:15px;height:12px;background:#fff;border:1px solid #e0e0e0;border-top:3px solid #e0e0e0"></div><div class="t" style="left:44px;top:346px;line-height:15px;letter-spacing:-0.22px;color:#000">26</div><div class="a" style="left:10px;top:367.0px;width:9px;height:1px;background:#555"></div><div class="a" style="left:5px;top:362.5px;width:10px;height:10px;background:#fafafa;border:1.5px solid #b8b8b8;border-radius:2px"></div><div class="a" style="left:7.5px;top:366.8px;width:5px;height:1.4px;background:#4a5fa8"></div><div class="a" style="left:9.3px;top:365.0px;width:1.4px;height:5px;background:#4a5fa8"></div><div class="a" style="left:23px;top:361.0px;width:15px;height:12px;background:#fff;border:1px solid #0a74da;border-top:3px solid #0a74da"></div><div class="t" style="left:44px;top:361px;line-height:15px;letter-spacing:-0.22px;color:#000">27 : System Setting</div><div class="a" style="left:10px;top:382.0px;width:9px;height:1px;background:#555"></div><div class="a" style="left:5px;top:377.5px;width:10px;height:10px;background:#fafafa;border:1.5px solid #b8b8b8;border-radius:2px"></div><div class="a" style="left:7.5px;top:381.8px;width:5px;height:1.4px;background:#4a5fa8"></div><div class="a" style="left:9.3px;top:380.0px;width:1.4px;height:5px;background:#4a5fa8"></div><div class="a" style="left:23px;top:376.0px;width:15px;height:12px;background:#fff;border:1px solid #0a74da;border-top:3px solid #0a74da"></div><div class="t" style="left:44px;top:376px;line-height:15px;letter-spacing:-0.22px;color:#000">28 : reboot HMI</div><div class="a" style="left:20px;top:390px;width:390px;height:15px;background:#efefef"></div><div class="a" style="left:10px;top:397.0px;width:9px;height:1px;background:#555"></div><div class="a" style="left:5px;top:392.5px;width:10px;height:10px;background:#fafafa;border:1.5px solid #b8b8b8;border-radius:2px"></div><div class="a" style="left:7.5px;top:396.8px;width:5px;height:1.4px;background:#4a5fa8"></div><div class="a" style="left:9.3px;top:395.0px;width:1.4px;height:5px;background:#4a5fa8"></div><div class="a" style="left:23px;top:391.0px;width:15px;height:12px;background:#b5d5f2;border:1px solid #0a74da;border-top:3px solid #0a74da"></div><div class="t" style="left:44px;top:391px;line-height:15px;letter-spacing:-0.22px;color:#000">29 : System Setting BG</div><div class="a" style="left:10px;top:412.0px;width:9px;height:1px;background:#555"></div><div class="a" style="left:23px;top:406.0px;width:15px;height:12px;background:#fff;border:1px solid #e0e0e0;border-top:3px solid #e0e0e0"></div><div class="t" style="left:44px;top:406px;line-height:15px;letter-spacing:-0.22px;color:#000">30</div><div class="a" style="left:10px;top:427.0px;width:9px;height:1px;background:#555"></div><div class="a" style="left:23px;top:421.0px;width:15px;height:12px;background:#fff;border:1px solid #e0e0e0;border-top:3px solid #e0e0e0"></div><div class="t" style="left:44px;top:421px;line-height:15px;letter-spacing:-0.22px;color:#000">31</div><div class="a" style="left:10px;top:442.0px;width:9px;height:1px;background:#555"></div><div class="a" style="left:23px;top:436.0px;width:15px;height:12px;background:#fff;border:1px solid #e0e0e0;border-top:3px solid #e0e0e0"></div><div class="t" style="left:44px;top:436px;line-height:15px;letter-spacing:-0.22px;color:#000">32</div><div class="a" style="left:10px;top:457.0px;width:9px;height:1px;background:#555"></div><div class="a" style="left:23px;top:451.0px;width:15px;height:12px;background:#fff;border:1px solid #e0e0e0;border-top:3px solid #e0e0e0"></div><div class="t" style="left:44px;top:451px;line-height:15px;letter-spacing:-0.22px;color:#000">33</div><div class="a" style="left:10px;top:472.0px;width:9px;height:1px;background:#555"></div><div class="a" style="left:23px;top:466.0px;width:15px;height:12px;background:#fff;border:1px solid #e0e0e0;border-top:3px solid #e0e0e0"></div><div class="t" style="left:44px;top:466px;line-height:15px;letter-spacing:-0.22px;color:#000">34</div><div class="a" style="left:10px;top:487.0px;width:9px;height:1px;background:#555"></div><div class="a" style="left:23px;top:481.0px;width:15px;height:12px;background:#fff;border:1px solid #e0e0e0;border-top:3px solid #e0e0e0"></div><div class="t" style="left:44px;top:481px;line-height:15px;letter-spacing:-0.22px;color:#000">35</div><div class="a" style="left:10px;top:502.0px;width:9px;height:1px;background:#555"></div><div class="a" style="left:23px;top:496.0px;width:15px;height:12px;background:#fff;border:1px solid #e0e0e0;border-top:3px solid #e0e0e0"></div><div class="t" style="left:44px;top:496px;line-height:15px;letter-spacing:-0.22px;color:#000">36</div><div class="a" style="left:10px;top:517.0px;width:9px;height:1px;background:#555"></div><div class="a" style="left:23px;top:511.0px;width:15px;height:12px;background:#fff;border:1px solid #e0e0e0;border-top:3px solid #e0e0e0"></div><div class="t" style="left:44px;top:511px;line-height:15px;letter-spacing:-0.22px;color:#000">37</div><div class="a" style="left:10px;top:532.0px;width:9px;height:1px;background:#555"></div><div class="a" style="left:23px;top:526.0px;width:15px;height:12px;background:#fff;border:1px solid #e0e0e0;border-top:3px solid #e0e0e0"></div><div class="t" style="left:44px;top:526px;line-height:15px;letter-spacing:-0.22px;color:#000">38</div><div class="a" style="left:10px;top:547.0px;width:9px;height:1px;background:#555"></div><div class="a" style="left:23px;top:541.0px;width:15px;height:12px;background:#fff;border:1px solid #e0e0e0;border-top:3px solid #e0e0e0"></div><div class="t" style="left:44px;top:541px;line-height:15px;letter-spacing:-0.22px;color:#000">39</div><div class="a" style="left:10px;top:562.0px;width:9px;height:1px;background:#555"></div><div class="a" style="left:23px;top:556.0px;width:15px;height:12px;background:#fff;border:1px solid #e0e0e0;border-top:3px solid #e0e0e0"></div><div class="t" style="left:44px;top:556px;line-height:15px;letter-spacing:-0.22px;color:#000">40</div><div class="a" style="left:10px;top:577.0px;width:9px;height:1px;background:#555"></div><div class="a" style="left:23px;top:571.0px;width:15px;height:12px;background:#fff;border:1px solid #e0e0e0;border-top:3px solid #e0e0e0"></div><div class="t" style="left:44px;top:571px;line-height:15px;letter-spacing:-0.22px;color:#000">41</div><div class="a" style="left:10px;top:592.0px;width:9px;height:1px;background:#555"></div><div class="a" style="left:23px;top:586.0px;width:15px;height:12px;background:#fff;border:1px solid #e0e0e0;border-top:3px solid #e0e0e0"></div><div class="t" style="left:44px;top:586px;line-height:15px;letter-spacing:-0.22px;color:#000">42</div><div class="a" style="left:10px;top:607.0px;width:9px;height:1px;background:#555"></div><div class="a" style="left:23px;top:601.0px;width:15px;height:12px;background:#fff;border:1px solid #e0e0e0;border-top:3px solid #e0e0e0"></div><div class="t" style="left:44px;top:601px;line-height:15px;letter-spacing:-0.22px;color:#000">43</div><div class="a" style="left:10px;top:622.0px;width:9px;height:1px;background:#555"></div><div class="a" style="left:23px;top:616.0px;width:15px;height:12px;background:#fff;border:1px solid #e0e0e0;border-top:3px solid #e0e0e0"></div><div class="t" style="left:44px;top:616px;line-height:15px;letter-spacing:-0.22px;color:#000">44</div><div class="a" style="left:10px;top:637.0px;width:9px;height:1px;background:#555"></div><div class="a" style="left:23px;top:631.0px;width:15px;height:12px;background:#fff;border:1px solid #e0e0e0;border-top:3px solid #e0e0e0"></div><div class="t" style="left:44px;top:631px;line-height:15px;letter-spacing:-0.22px;color:#000">45</div><div class="a" style="left:10px;top:652.0px;width:9px;height:1px;background:#555"></div><div class="a" style="left:23px;top:646.0px;width:15px;height:12px;background:#fff;border:1px solid #e0e0e0;border-top:3px solid #e0e0e0"></div><div class="t" style="left:44px;top:646px;line-height:15px;letter-spacing:-0.22px;color:#000">46</div><div class="a" style="left:10px;top:667.0px;width:9px;height:1px;background:#555"></div><div class="a" style="left:23px;top:661.0px;width:15px;height:12px;background:#fff;border:1px solid #e0e0e0;border-top:3px solid #e0e0e0"></div><div class="t" style="left:44px;top:661px;line-height:15px;letter-spacing:-0.22px;color:#000">47</div><div class="a" style="left:10px;top:682.0px;width:9px;height:1px;background:#555"></div><div class="a" style="left:23px;top:676.0px;width:15px;height:12px;background:#fff;border:1px solid #e0e0e0;border-top:3px solid #e0e0e0"></div><div class="t" style="left:44px;top:676px;line-height:15px;letter-spacing:-0.22px;color:#000">48</div><div class="a" style="left:10px;top:697.0px;width:9px;height:1px;background:#555"></div><div class="a" style="left:23px;top:691.0px;width:15px;height:12px;background:#fff;border:1px solid #e0e0e0;border-top:3px solid #e0e0e0"></div><div class="t" style="left:44px;top:691px;line-height:15px;letter-spacing:-0.22px;color:#000">49</div><div class="a" style="left:10px;top:712.0px;width:9px;height:1px;background:#555"></div><div class="a" style="left:23px;top:706.0px;width:15px;height:12px;background:#fff;border:1px solid #e0e0e0;border-top:3px solid #e0e0e0"></div><div class="t" style="left:44px;top:706px;line-height:15px;letter-spacing:-0.22px;color:#000">50</div><div class="a" style="left:10px;top:727.0px;width:9px;height:1px;background:#555"></div><div class="a" style="left:23px;top:721.0px;width:15px;height:12px;background:#fff;border:1px solid #e0e0e0;border-top:3px solid #e0e0e0"></div><div class="t" style="left:44px;top:721px;line-height:15px;letter-spacing:-0.22px;color:#000">51</div><div class="a" style="left:10px;top:742.0px;width:9px;height:1px;background:#555"></div><div class="a" style="left:23px;top:736.0px;width:15px;height:12px;background:#fff;border:1px solid #e0e0e0;border-top:3px solid #e0e0e0"></div><div class="t" style="left:44px;top:736px;line-height:15px;letter-spacing:-0.22px;color:#000">52</div><div class="a" style="left:10px;top:757.0px;width:9px;height:1px;background:#555"></div><div class="a" style="left:23px;top:751.0px;width:15px;height:12px;background:#fff;border:1px solid #e0e0e0;border-top:3px solid #e0e0e0"></div><div class="t" style="left:44px;top:751px;line-height:15px;letter-spacing:-0.22px;color:#000">53</div><div class="a" style="left:10px;top:772.0px;width:9px;height:1px;background:#555"></div><div class="a" style="left:23px;top:766.0px;width:15px;height:12px;background:#fff;border:1px solid #e0e0e0;border-top:3px solid #e0e0e0"></div><div class="t" style="left:44px;top:766px;line-height:15px;letter-spacing:-0.22px;color:#000">54</div><div class="a" style="left:10px;top:787.0px;width:9px;height:1px;background:#555"></div><div class="a" style="left:23px;top:781.0px;width:15px;height:12px;background:#fff;border:1px solid #e0e0e0;border-top:3px solid #e0e0e0"></div><div class="t" style="left:44px;top:781px;line-height:15px;letter-spacing:-0.22px;color:#000">55</div><div class="a" style="left:10px;top:802.0px;width:9px;height:1px;background:#555"></div><div class="a" style="left:23px;top:796.0px;width:15px;height:12px;background:#fff;border:1px solid #e0e0e0;border-top:3px solid #e0e0e0"></div><div class="t" style="left:44px;top:796px;line-height:15px;letter-spacing:-0.22px;color:#000">56</div><div class="a" style="left:10px;top:817.0px;width:9px;height:1px;background:#555"></div><div class="a" style="left:23px;top:811.0px;width:15px;height:12px;background:#fff;border:1px solid #e0e0e0;border-top:3px solid #e0e0e0"></div><div class="t" style="left:44px;top:811px;line-height:15px;letter-spacing:-0.22px;color:#000">57</div></div>
<div class="a" style="left:2px;top:985px;width:258px;height:22px;background:#f0f0f0"></div>
<div class="a" style="left:2px;top:985px;width:43px;height:21px;background:#f0f0f0;border:1px solid #d9d9d9;border-top:none"></div>
<div class="t" style="left:8px;top:988px;color:#6d6d6d;font-size:11.6px">Adres</div>
<div class="a" style="left:44px;top:984px;width:91px;height:23px;background:#fff;border:1px solid #d9d9d9;border-top:none"></div>
<div class="t" style="left:50px;top:988px;color:#000;font-size:11.6px">Drzewko okien</div>
<div class="a" style="left:134px;top:985px;width:89px;height:21px;background:#f0f0f0;border:1px solid #d9d9d9;border-top:none"></div>
<div class="t" style="left:140px;top:988px;color:#6d6d6d;font-size:11.6px">Podgląd okien</div>
<div class="a" style="left:222px;top:985px;width:38px;height:21px;background:#f0f0f0;border:1px solid #d9d9d9;border-top:none"></div>
<div class="t" style="left:228px;top:988px;color:#6d6d6d;font-size:11.6px">Web</div><svg class="a" style="left:449px;top:149px" width="7" height="11"><path d="M5.5 0.5V9.5L0.8 5Z" fill="none" stroke="#000" stroke-width="1.1"/></svg>
<svg class="a" style="left:1676px;top:149px" width="7" height="11"><path d="M1 1V10L5.7 5.5Z" fill="none" stroke="#000" stroke-width="1.1"/></svg>
<svg class="a" style="left:0;top:0" width="1000" height="170"><defs><linearGradient id="tg" x1="0" y1="0" x2="0" y2="1"><stop offset="0" stop-color="#d6e6f7"/><stop offset="1" stop-color="#a8c6e8"/></linearGradient><linearGradient id="ta" x1="0" y1="0" x2="0" y2="1"><stop offset="0" stop-color="#f4fafe"/><stop offset="1" stop-color="#b6dbf5"/></linearGradient></defs><path d="M709.5 164.5V150.5Q709.5 147.5 712.5 147.5H806.5Q810 147.5 811 150L802 164.5Z" fill="url(#tg)" stroke="#97aecb"/><path d="M590.5 164.5V150.5Q590.5 147.5 593.5 147.5H705.5Q708.5 147.5 708.5 150.5V164.5Z" fill="url(#tg)" stroke="#97aecb"/><path d="M463.5 164.5L479 148.5Q480 147.5 482 147.5H585.5Q588.5 147.5 588.5 150.5V164.5Z" fill="url(#tg)" stroke="#97aecb"/><path d="M802.5 164.5L817.5 148.5Q818.5 147.5 820.5 147.5H960.5Q963.5 147.5 963.5 150.5V164.5Z" fill="url(#ta)" stroke="#97aecb"/></svg>
<div class="t" style="left:485px;top:149px;font-size:11px;color:#000;letter-spacing:0.05px">10 - WINDOW_010</div>
<div class="t" style="left:602px;top:149px;font-size:11px;color:#000;letter-spacing:0px">27 - System Setting</div>
<div class="t" style="left:720px;top:149px;font-size:11px;color:#000;letter-spacing:0.25px">28 - reboot HMI</div>
<div class="t" style="left:824px;top:149px;font-size:11px;font-weight:bold;color:#000;letter-spacing:-0.2px">29 - System Setting BG</div>
<svg class="a" style="left:951px;top:154px" width="9" height="8"><path d="M1 0.5L8 7.5M8 0.5L1 7.5" stroke="#000" stroke-width="1.5"/></svg>
<div class="a" style="left:443px;top:164px;width:251px;height:844px;border:1px solid #a0a0a0;background:#b3d6f3;width:1251px"></div>
<div class="a" style="left:448px;top:168px;width:1241px;height:835px;border:1px solid #a0a0a0;background:#f0f0f0"></div>
<div class="a" style="left:449px;top:169px;width:1239px;height:18px;background:#f0f0f0;border-bottom:1px solid #a0a0a0"></div>
<div class="a" style="left:449px;top:169px;width:18px;height:833px;background:#f0f0f0;border-right:1px solid #a0a0a0"></div>
<div class="a" style="left:449px;top:169px;width:18px;height:18px;border-right:1px solid #a0a0a0;border-bottom:1px solid #a0a0a0"></div>
<svg class="a" style="left:452px;top:172px" width="12" height="12"><rect x="0.5" y="0.5" width="11" height="11" fill="#fff" stroke="#a8a8a8"/><rect x="0" y="0" width="12" height="2.5" fill="#4a90e2"/><circle cx="3.5" cy="5" r="1.6" fill="#f08a3a"/><path d="M6 5H9M3.5 7.5V10" stroke="#999" stroke-width="0.8"/></svg>
<div class="a" style="left:805px;top:169px;width:528px;height:18px;background:#fff"></div>
<div class="a" style="left:449px;top:436px;width:18px;height:299px;background:#fff"></div>
<svg class="a" style="left:0;top:0" width="1400" height="200"><path d="M805.5 170V186M810.5 182V186M816.5 180V186M821.5 182V186M827.5 180V186M832.5 182V186M838.5 180V186M843.5 182V186M849.5 180V186M854.5 182V186M860.5 180V186M865.5 182V186M871.5 180V186M876.5 182V186M882.5 180V186M887.5 182V186M893.5 180V186M898.5 182V186M904.5 180V186M909.5 182V186M915.5 170V186M920.5 182V186M926.5 180V186M931.5 182V186M937.5 180V186M942.5 182V186M948.5 180V186M953.5 182V186M959.5 180V186M964.5 182V186M970.5 180V186M975.5 182V186M981.5 180V186M986.5 182V186M992.5 180V186M997.5 182V186M1003.5 180V186M1008.5 182V186M1014.5 180V186M1019.5 182V186M1025.5 170V186M1030.5 182V186M1036.5 180V186M1041.5 182V186M1047.5 180V186M1052.5 182V186M1058.5 180V186M1063.5 182V186M1069.5 180V186M1074.5 182V186M1080.5 180V186M1085.5 182V186M1091.5 180V186M1096.5 182V186M1102.5 180V186M1107.5 182V186M1113.5 180V186M1118.5 182V186M1124.5 180V186M1129.5 182V186M1135.5 170V186M1140.5 182V186M1146.5 180V186M1151.5 182V186M1157.5 180V186M1162.5 182V186M1168.5 180V186M1173.5 182V186M1179.5 180V186M1184.5 182V186M1190.5 180V186M1195.5 182V186M1201.5 180V186M1206.5 182V186M1212.5 180V186M1217.5 182V186M1223.5 180V186M1228.5 182V186M1234.5 180V186M1239.5 182V186M1245.5 170V186M1250.5 182V186M1256.5 180V186M1261.5 182V186M1267.5 180V186M1272.5 182V186M1278.5 180V186M1283.5 182V186M1289.5 180V186M1294.5 182V186M1300.5 180V186M1305.5 182V186M1311.5 180V186M1316.5 182V186M1322.5 180V186M1327.5 182V186M829.5 170V186M469.5 170V186" stroke="#000" stroke-width="1"/></svg>
<div class="t" style="left:800.0px;top:172px;width:4.8px;font-size:10px;line-height:10px;letter-spacing:-0.75px;color:#000">0</div>
<div class="t" style="left:900.4px;top:172px;width:14.399999999999999px;font-size:10px;line-height:10px;letter-spacing:-0.75px;color:#000">100</div>
<div class="t" style="left:1010.4px;top:172px;width:14.399999999999999px;font-size:10px;line-height:10px;letter-spacing:-0.75px;color:#000">200</div>
<div class="t" style="left:1120.3999999999999px;top:172px;width:14.399999999999999px;font-size:10px;line-height:10px;letter-spacing:-0.75px;color:#000">300</div>
<div class="t" style="left:1230.3999999999999px;top:172px;width:14.399999999999999px;font-size:10px;line-height:10px;letter-spacing:-0.75px;color:#000">400</div>
<svg class="a" style="left:0;top:0" width="500" height="800"><path d="M451 436.5H466M462 441.5H466M460 447.5H466M462 452.5H466M460 458.5H466M462 463.5H466M460 469.5H466M462 474.5H466M460 480.5H466M462 485.5H466M460 491.5H466M462 496.5H466M460 502.5H466M462 507.5H466M460 513.5H466M462 518.5H466M460 524.5H466M462 529.5H466M460 535.5H466M462 540.5H466M451 546.5H466M462 551.5H466M460 557.5H466M462 562.5H466M460 568.5H466M462 573.5H466M460 579.5H466M462 584.5H466M460 590.5H466M462 595.5H466M460 601.5H466M462 606.5H466M460 612.5H466M462 617.5H466M460 623.5H466M462 628.5H466M460 634.5H466M462 639.5H466M460 645.5H466M462 650.5H466M451 656.5H466M462 661.5H466M460 667.5H466M462 672.5H466M460 678.5H466M462 683.5H466M460 689.5H466M462 694.5H466M460 700.5H466M462 705.5H466M460 711.5H466M462 716.5H466M460 722.5H466M462 727.5H466M460 733.5H466M450 189.5H466M450 303.5H466" stroke="#000" stroke-width="1"/></svg>
<div class="t" style="left:451px;top:431.09999999999997px;width:10px;height:4.6px;font-size:10px;line-height:10px;letter-spacing:-0.9px;color:#000;writing-mode:vertical-rl;transform:rotate(180deg)">0</div>
<div class="t" style="left:451px;top:531.9000000000001px;width:10px;height:13.799999999999999px;font-size:10px;line-height:10px;letter-spacing:-0.9px;color:#000;writing-mode:vertical-rl;transform:rotate(180deg)">100</div>
<div class="t" style="left:451px;top:641.9000000000001px;width:10px;height:13.799999999999999px;font-size:10px;line-height:10px;letter-spacing:-0.9px;color:#000;writing-mode:vertical-rl;transform:rotate(180deg)">200</div>
<div class="a" style="left:469px;top:188px;width:1201px;height:796px;background:#c0c0c0"></div>
<div class="a" style="left:468px;top:984px;width:1220px;height:1px;background:#fff"></div>
<div class="a" style="left:1670px;top:188px;width:1px;height:797px;background:#fff"></div>
<div class="a" style="left:1671px;top:188px;width:17px;height:797px;background:#f0f0f0"></div>
<div class="a" style="left:1671px;top:250px;width:15px;height:674px;background:#cdcdcd"></div>
<svg class="a" style="left:1674px;top:195px" width="10" height="7"><path d="M1 5.5L5 1.5L9 5.5" fill="none" stroke="#606060" stroke-width="2"/></svg>
<svg class="a" style="left:1674px;top:972px" width="10" height="7"><path d="M1 1.5L5 5.5L9 1.5" fill="none" stroke="#606060" stroke-width="2"/></svg>
<div class="a" style="left:469px;top:985px;width:1202px;height:17px;background:#f0f0f0"></div>
<div class="a" style="left:628px;top:985px;width:884px;height:15px;background:#cdcdcd"></div>
<svg class="a" style="left:473px;top:988px" width="7" height="10"><path d="M5.5 1L1.5 5L5.5 9" fill="none" stroke="#606060" stroke-width="2"/></svg>
<svg class="a" style="left:1658px;top:988px" width="7" height="10"><path d="M1.5 1L5.5 5L1.5 9" fill="none" stroke="#606060" stroke-width="2"/></svg>
<div class="a" style="left:1671px;top:985px;width:17px;height:17px;background:#f0f0f0"></div><svg class="a" style="left:0;top:0" width="1400" height="800"><defs>
<linearGradient id="hb" x1="0" y1="0" x2="0" y2="1"><stop offset="0" stop-color="#382c2a"/><stop offset="0.25" stop-color="#463e3c"/><stop offset="0.45" stop-color="#5e5856"/><stop offset="0.7" stop-color="#8a8785"/><stop offset="1" stop-color="#acacac"/></linearGradient>
<linearGradient id="hh" x1="0" y1="0" x2="0" y2="1"><stop offset="0" stop-color="#a6a6b2"/><stop offset="0.5" stop-color="#9a9aa0"/><stop offset="1" stop-color="#7a7a7a"/></linearGradient>
<linearGradient id="hk" x1="0" y1="0" x2="0" y2="1"><stop offset="0" stop-color="#2a2a2a"/><stop offset="0.6" stop-color="#161410"/><stop offset="1" stop-color="#030405"/></linearGradient>
<linearGradient id="hg" x1="0" y1="0" x2="0" y2="1"><stop offset="0" stop-color="#37b27c"/><stop offset="0.3" stop-color="#35a072"/><stop offset="1" stop-color="#3c302e"/></linearGradient>
<linearGradient id="bb" x1="0" y1="0" x2="0" y2="1"><stop offset="0" stop-color="#77736f"/><stop offset="0.45" stop-color="#4a4240"/><stop offset="1" stop-color="#2b2220"/></linearGradient>
<linearGradient id="gl" x1="0" y1="0" x2="0" y2="1"><stop offset="0" stop-color="#b4b2b0"/><stop offset="0.35" stop-color="#9a9896"/><stop offset="1" stop-color="#5c5654"/></linearGradient>
<linearGradient id="pl" x1="0" y1="0" x2="0" y2="1"><stop offset="0" stop-color="#6f6560"/><stop offset="0.3" stop-color="#857a73"/><stop offset="1" stop-color="#7d736d"/></linearGradient>
<linearGradient id="pb" x1="0" y1="0" x2="0" y2="1"><stop offset="0" stop-color="#dfe8ee"/><stop offset="1" stop-color="#8b98a2"/></linearGradient>
<linearGradient id="hs" x1="0" y1="0" x2="0" y2="1"><stop offset="0" stop-color="#6a6a6a"/><stop offset="1" stop-color="#9a9a9a"/></linearGradient>
<pattern id="dots" x="805" y="436" width="5.1" height="4.85" patternUnits="userSpaceOnUse"><rect x="0.9" y="0.4" width="3.3" height="3.4" rx="1" fill="#e2f7b4"/></pattern>
<linearGradient id="fade" x1="0" y1="0" x2="0" y2="1"><stop offset="0" stop-color="#fff" stop-opacity="1"/><stop offset="0.3" stop-color="#fff" stop-opacity="0.8"/><stop offset="0.75" stop-color="#fff" stop-opacity="0.25"/><stop offset="1" stop-color="#fff" stop-opacity="0.05"/></linearGradient>
<mask id="dm"><rect x="805" y="436" width="527" height="21" fill="url(#fade)"/></mask>
<filter id="sh" x="-5%" y="-5%" width="115%" height="115%"><feGaussianBlur stdDeviation="2.5"/></filter>
</defs><rect x="811" y="442" width="530" height="302" fill="#000" opacity="0.38" filter="url(#sh)"/><rect x="805" y="436" width="527" height="299" fill="url(#hb)"/><rect x="805" y="436" width="527" height="21" fill="url(#hh)"/><rect x="805" y="436" width="527" height="21" fill="url(#dots)" mask="url(#dm)"/><rect x="805" y="457" width="527" height="20" fill="url(#hk)"/><rect x="805" y="477" width="527" height="9" fill="url(#hg)"/><text x="807" y="449.5" font-family="Liberation Sans" font-size="11.5" letter-spacing="-0.3" fill="#ff0000">GP_0</text><g transform="translate(839.5 466.2) scale(0.92 1)"><text x="1" y="1" font-family="Liberation Sans" font-size="25" font-weight="bold" letter-spacing="3.5" fill="#000" opacity="0.5" stroke="#000" stroke-width="0.5">System Setting</text><text x="0" y="0" font-family="Liberation Sans" font-size="25" font-weight="bold" letter-spacing="3.5" fill="#fafafa" stroke="#fafafa" stroke-width="0.5">System Setting</text></g><path d="M817 556H982V569Q982 575 976 575H823Q817 575 817 569Z" fill="#d2c2b2" fill-opacity="0.36"/><rect x="816.5" y="533.5" width="166" height="29" rx="6.5" fill="#6e6866" opacity="0.6"/><rect x="817" y="534" width="165" height="28" rx="6" fill="url(#bb)"/><path d="M821 536.5H978Q981 536.5 979 539.5L973 546Q971 547 966 547H833Q828 547 826 546L820 539.5Q818 536.5 821 536.5Z" fill="url(#gl)" opacity="0.95"/><path d="M831 539V557L835 553L839 560L842 558.5L838.5 551.5L843 551Z" fill="#d8d8d8" stroke="#333" stroke-width="0.5"/><path d="M852.0 538V558" stroke="#1a1412" stroke-width="1"/><path d="M853.0 538V558" stroke="#dcdcdc" stroke-width="1.3"/><rect x="860" y="542" width="13" height="13" fill="#1a1412"/><rect x="861" y="543" width="12" height="12" fill="#fbfbe2"/><text x="880.5" y="552.8" font-family="Liberation Sans" font-size="8.6" font-weight="bold" fill="#f0f0f0" text-anchor="start">Show</text><rect x="915.5" y="542" width="13" height="13" fill="#1a1412"/><rect x="916.5" y="543" width="12" height="12" fill="#fbfbe2"/><text x="935.5" y="552.8" font-family="Liberation Sans" font-size="8.6" font-weight="bold" fill="#f0f0f0" text-anchor="start">Hide</text><text x="896.5" y="571.2" font-family="Liberation Sans" font-size="7.3" font-weight="bold" fill="#e6e6e6" text-anchor="middle">Mouse Cursor</text><path d="M817 608H982V620Q982 626 976 626H823Q817 626 817 620Z" fill="#d2c2b2" fill-opacity="0.36"/><rect x="816.5" y="587.5" width="166" height="27" rx="6.5" fill="#6e6866" opacity="0.6"/><rect x="817" y="588" width="165" height="26" rx="6" fill="url(#bb)"/><path d="M821 590.5H978Q981 590.5 979 593.5L973 600Q971 601 966 601H833Q828 601 826 600L820 593.5Q818 590.5 821 590.5Z" fill="url(#gl)" opacity="0.95"/><path d="M828 597H832L838 591V609L832 603H828Z" fill="#c8c8c8"/><path d="M840 594A7 7 0 0 1 840 606M842 591A10 10 0 0 1 842 609" stroke="#c8c8c8" stroke-width="1.6" fill="none"/><path d="M852.0 591V610" stroke="#1a1412" stroke-width="1"/><path d="M853.0 591V610" stroke="#dcdcdc" stroke-width="1.3"/><rect x="860" y="594" width="13" height="13" fill="#1a1412"/><rect x="861" y="595" width="12" height="12" fill="#fbfbe2"/><text x="880.5" y="604.5" font-family="Liberation Sans" font-size="8.6" font-weight="bold" fill="#f0f0f0" text-anchor="start">Enable</text><rect x="915.5" y="594" width="13" height="13" fill="#1a1412"/><rect x="916.5" y="595" width="12" height="12" fill="#fbfbe2"/><text x="935.5" y="604.5" font-family="Liberation Sans" font-size="8.6" font-weight="bold" fill="#f0f0f0" text-anchor="start">Disable</text><text x="896.5" y="623.5" font-family="Liberation Sans" font-size="8.6" font-weight="bold" fill="#e6e6e6" text-anchor="middle">Buzzer</text><path d="M817 660H982V672Q982 678 976 678H823Q817 678 817 672Z" fill="#d2c2b2" fill-opacity="0.36"/><rect x="816.5" y="638.5" width="166" height="28" rx="6.5" fill="#6e6866" opacity="0.6"/><rect x="817" y="639" width="165" height="27" rx="6" fill="url(#bb)"/><path d="M821 641.5H978Q981 641.5 979 644.5L973 651Q971 652 966 652H833Q828 652 826 651L820 644.5Q818 641.5 821 641.5Z" fill="url(#gl)" opacity="0.95"/><rect x="827.5" y="643.5" width="19" height="18" fill="none" stroke="#bdbdbd" stroke-width="1.6"/><path d="M832 652.5L836 649V651H842V654H836V656Z" fill="#bdbdbd"/><path d="M852.0 643V661" stroke="#1a1412" stroke-width="1"/><path d="M853.0 643V661" stroke="#dcdcdc" stroke-width="1.3"/><rect x="860" y="646" width="13" height="13" fill="#1a1412"/><rect x="861" y="647" width="12" height="12" fill="#fbfbe2"/><text x="880.5" y="656" font-family="Liberation Sans" font-size="8.6" font-weight="bold" fill="#f0f0f0" text-anchor="start">Show</text><rect x="915.5" y="646" width="13" height="13" fill="#1a1412"/><rect x="916.5" y="647" width="12" height="12" fill="#fbfbe2"/><text x="935.5" y="656" font-family="Liberation Sans" font-size="8.6" font-weight="bold" fill="#f0f0f0" text-anchor="start">Hide</text><text x="896.5" y="675.5" font-family="Liberation Sans" font-size="8.6" font-weight="bold" fill="#e6e6e6" text-anchor="middle">System Setting Bar</text><rect x="816.5" y="688.5" width="90" height="30" rx="6.5" fill="#6e6866" opacity="0.6"/><rect x="817" y="689" width="89" height="29" rx="6" fill="url(#bb)"/><path d="M821 691.5H902Q905 691.5 903 694.5L897 701Q895 702 890 702H833Q828 702 826 701L820 694.5Q818 691.5 821 691.5Z" fill="url(#gl)" opacity="0.95"/><circle cx="837.5" cy="704" r="5" fill="none" stroke="#d0d0d0" stroke-width="1.5"/><path d="M837.5 700V708" stroke="#d0d0d0" stroke-width="1.2"/><path d="M837.5 694V697M837.5 711V714M827.5 704H830.5M844.5 704H847.5M830.5 697L832.5 699M842.5 709L844.5 711M844.5 697L842.5 699M832.5 709L830.5 711" stroke="#d0d0d0" stroke-width="1.2"/><rect x="851.5" y="695.5" width="45" height="16" fill="#3a3a3a"/><rect x="852.5" y="697" width="43.5" height="14" fill="#fff"/><rect x="915.5" y="689" width="17" height="13.5" rx="3" fill="url(#pb)"/><rect x="916.5" y="690" width="15" height="5" rx="2" fill="#fff" opacity="0.35"/><path d="M924 692V699M920.5 695.5H927.5" stroke="#3a3a3a" stroke-width="2.6"/><rect x="915.5" y="708" width="17" height="13.5" rx="3" fill="url(#pb)"/><rect x="916.5" y="709" width="15" height="5" rx="2" fill="#fff" opacity="0.35"/><path d="M920 714.5H928" stroke="#3a3a3a" stroke-width="2.6"/><path d="M988.5 556H1154V569.5Q1154 575.5 1148 575.5H994.5Q988.5 575.5 988.5 569.5Z" fill="#d2c2b2" fill-opacity="0.36"/><rect x="988.0" y="533.5" width="166.5" height="29" rx="6.5" fill="#6e6866" opacity="0.6"/><rect x="988.5" y="534" width="165.5" height="28" rx="6" fill="url(#bb)"/><path d="M992.5 536.5H1150Q1153 536.5 1151 539.5L1145 546Q1143 547 1138 547H1004.5Q999.5 547 997.5 546L991.5 539.5Q989.5 536.5 992.5 536.5Z" fill="url(#gl)" opacity="0.95"/><path d="M997.5 539V545H1018V539" fill="none" stroke="#cfcfcf" stroke-width="1.8"/><rect x="1003" y="547" width="11" height="10" fill="#c8c8c8"/><rect x="1005" y="549" width="2" height="2" fill="#333"/><rect x="1010" y="549" width="2" height="2" fill="#333"/><rect x="1006.5" y="553" width="4" height="4" fill="#555"/><rect x="1000" y="557" width="15" height="3" fill="#bdbdbd"/><path d="M1023.5 538V558" stroke="#1a1412" stroke-width="1"/><path d="M1024.5 538V558" stroke="#dcdcdc" stroke-width="1.3"/><rect x="1032" y="542" width="13" height="13" fill="#1a1412"/><rect x="1033" y="543" width="12" height="12" fill="#fbfbe2"/><text x="1051.5" y="552.8" font-family="Liberation Sans" font-size="8.6" font-weight="bold" fill="#f0f0f0" text-anchor="start">Enable</text><rect x="1087" y="542" width="13" height="13" fill="#1a1412"/><rect x="1088" y="543" width="12" height="12" fill="#fbfbe2"/><text x="1107.5" y="552.8" font-family="Liberation Sans" font-size="8.6" font-weight="bold" fill="#f0f0f0" text-anchor="start">Disable</text><text x="1068" y="571.2" font-family="Liberation Sans" font-size="8.6" font-weight="bold" fill="#ececec" text-anchor="middle">HMI upload function</text><rect x="988.0" y="586.5" width="166.5" height="28.5" rx="6.5" fill="#6e6866" opacity="0.6"/><rect x="988.5" y="587" width="165.5" height="27.5" rx="6" fill="url(#bb)"/><path d="M992.5 589.5H1150Q1153 589.5 1151 592.5L1145 599Q1143 600 1138 600H1004.5Q999.5 600 997.5 599L991.5 592.5Q989.5 589.5 992.5 589.5Z" fill="url(#gl)" opacity="0.95"/><path d="M1003 595A7.5 7.5 0 1 0 1013 595" fill="none" stroke="#c8c8c8" stroke-width="3"/><path d="M1008 590.5V601" stroke="#c8c8c8" stroke-width="2.8"/><text x="1027" y="605" font-family="Liberation Sans" font-size="8.6" font-weight="bold" fill="#f0f0f0" text-anchor="start">Reboot HMI</text><rect x="988.0" y="626.0" width="166.5" height="29.0" rx="6.5" fill="#6e6866" opacity="0.6"/><rect x="988.5" y="626.5" width="165.5" height="28.0" rx="6" fill="url(#bb)"/><path d="M992.5 629.0H1150Q1153 629.0 1151 632.0L1145 638.5Q1143 639.5 1138 639.5H1004.5Q999.5 639.5 997.5 638.5L991.5 632.0Q989.5 629.0 992.5 629.0Z" fill="url(#gl)" opacity="0.95"/><path d="M1000 633L1014 648" stroke="#c8c8c8" stroke-width="2.5"/><circle cx="1000.5" cy="633.5" r="3" fill="none" stroke="#c8c8c8" stroke-width="2"/><path d="M1016 632L1002 648" stroke="#c8c8c8" stroke-width="3"/><circle cx="1013.5" cy="647" r="2" fill="#c8c8c8"/><text x="1026.8" y="644.5" font-family="Liberation Sans" font-size="8.6" font-weight="bold" fill="#f0f0f0" text-anchor="start">Open hardware setting dialog</text><path d="M988.5 688H1154V699.5Q1154 705.5 1148 705.5H994.5Q988.5 705.5 988.5 699.5Z" fill="#d2c2b2" fill-opacity="0.36"/><rect x="988.0" y="665.0" width="166.5" height="29.5" rx="6.5" fill="#6e6866" opacity="0.6"/><rect x="988.5" y="665.5" width="165.5" height="28.5" rx="6" fill="url(#bb)"/><path d="M992.5 668.0H1150Q1153 668.0 1151 671.0L1145 677.5Q1143 678.5 1138 678.5H1004.5Q999.5 678.5 997.5 677.5L991.5 671.0Q989.5 668.0 992.5 668.0Z" fill="url(#gl)" opacity="0.95"/><path d="M996 680H1020" stroke="#c8c8c8" stroke-width="1.8"/><path d="M1020 677V683L1024 680Z" fill="#c8c8c8"/><path d="M1000 680L1005 674H1010M1003 680L1007 686H1011" stroke="#c8c8c8" stroke-width="1.5" fill="none"/><circle cx="997" cy="680" r="2.2" fill="#c8c8c8"/><path d="M1023.5 670V690" stroke="#1a1412" stroke-width="1"/><path d="M1024.5 670V690" stroke="#dcdcdc" stroke-width="1.3"/><rect x="1032" y="673" width="13" height="13" fill="#1a1412"/><rect x="1033" y="674" width="12" height="12" fill="#fbfbe2"/><text x="1052" y="683.5" font-family="Liberation Sans" font-size="8.6" font-weight="bold" fill="#f0f0f0" text-anchor="start">Show</text><rect x="1087" y="673" width="13" height="13" fill="#1a1412"/><rect x="1088" y="674" width="12" height="12" fill="#fbfbe2"/><text x="1107.5" y="683.5" font-family="Liberation Sans" font-size="8.6" font-weight="bold" fill="#f0f0f0" text-anchor="start">Hide</text><text x="1068" y="702.5" font-family="Liberation Sans" font-size="8.6" font-weight="bold" fill="#ececec" text-anchor="middle">USB/SD Download dialog</text><rect x="1160.5" y="533.0" width="164.5" height="29.5" rx="6.5" fill="#6e6866" opacity="0.6"/><rect x="1161" y="533.5" width="163.5" height="28.5" rx="6" fill="url(#bb)"/><path d="M1165 536.0H1320.5Q1323.5 536.0 1321.5 539.0L1315.5 545.5Q1313.5 546.5 1308.5 546.5H1177Q1172 546.5 1170 545.5L1164 539.0Q1162 536.0 1165 536.0Z" fill="url(#gl)" opacity="0.95"/><path d="M1177 547V543A4 4 0 0 1 1185 543V547" fill="none" stroke="#c8c8c8" stroke-width="2"/><rect x="1175" y="546" width="12" height="10" rx="1" fill="#c8c8c8"/><rect x="1180" y="549" width="2" height="4" fill="#333"/><text x="1189.5" y="553" font-family="Liberation Sans" font-size="8.6" font-weight="bold" fill="#f0f0f0" text-anchor="start">HMI Key</text><rect x="1228.5" y="540" width="86" height="17" fill="#3a3a3a"/><rect x="1229" y="542" width="85" height="14.5" fill="#fff"/><path d="M1291 714L1307.5 697L1324 714" fill="none" stroke="#7a7a7a" stroke-width="2.4"/><path d="M1296 712L1307.5 701L1319 712V725H1311V716H1304V725H1296Z" fill="#7e7e7e"/><rect x="1315" y="699" width="3" height="5" fill="#7a7a7a"/></svg><div class="a" style="left:1700px;top:145px;width:220px;height:18px;background:linear-gradient(#c2d0df,#d6e2ee)"></div>
<div class="t" style="left:1704px;top:147px;font-size:11px;letter-spacing:0.25px;color:#000">Biblioteka Kształtów</div>
<svg class="a" style="left:1885px;top:150px" width="12" height="8"><path d="M0.5 0.5H10.5L5.5 6Z" fill="#000"/></svg>
<svg class="a" style="left:1904px;top:148px" width="10" height="10"><path d="M1 1L8.5 8.5M8.5 1L1 8.5" stroke="#000" stroke-width="1.6"/></svg>
<div class="a" style="left:1700px;top:163px;width:220px;height:821px;background:#fff;border:1px solid #a0a0a0"></div>
<div class="a" style="left:1704px;top:167px;width:212px;height:816px;background:#f0f0f0"></div>
<div class="a" style="left:1710px;top:173px;width:200px;height:18px;background:#e1e1e1;border:1px solid #adadad"></div>
<div class="t" style="left:1785px;top:175px;font-size:11.2px;color:#000">[ Projekt ]</div>
<svg class="a" style="left:1900px;top:184px" width="7" height="4"><path d="M0 0H6L3 3.5Z" fill="#000"/></svg>
<div class="a" style="left:1709px;top:200px;width:201px;height:20px;background:#f0f0f0;border:1px solid #e3e3e3;box-shadow:inset 0 0 0 1px #fff"></div>
<div class="a" style="left:1709px;top:226px;width:201px;height:540px;background:#f0f0f0;border-top:1px solid #a0a0a0;border-left:1px solid #a0a0a0;border-right:1px solid #fff;border-bottom:1px solid #fff"></div>
<div class="a" style="left:1715px;top:777px;width:187px;height:4px;background:#e7e7e7;border:1px solid #d6d6d6"></div>
<div class="a" style="left:1897px;top:772px;width:6px;height:13px;background:#0078d7"></div>
<div class="a" style="left:1709px;top:804px;width:13px;height:13px;background:#fff;border:1px solid #333"></div>
<div class="t" style="left:1724px;top:804px;font-size:11px;color:#000">Wnętrze</div>
<div class="a" style="left:1709px;top:832px;width:13px;height:13px;background:#fff;border:1px solid #333"></div>
<div class="t" style="left:1724px;top:832px;font-size:11px;color:#000">Ramka</div>
<div class="a" style="left:1710px;top:915px;width:138px;height:21px;background:#e1e1e1;border:1px solid #adadad"></div>
<div class="t" style="left:1715px;top:919px;font-size:11px;color:#000">Ustaw dla wszyst. stanów</div>
<div class="a" style="left:1857px;top:919px;width:13px;height:13px;background:#fff;border:1px solid #333"></div>
<div class="a" style="left:1872px;top:919px;width:44px;height:16px;overflow:hidden"><div class="t" style="left:0;top:0;font-size:11px;color:#000">Automaty</div></div>
<div class="a" style="left:1710px;top:945px;width:201px;height:1px;background:#a0a0a0"></div><div class="a" style="left:1710px;top:946px;width:201px;height:1px;background:#fff"></div>
<div class="a" style="left:1710px;top:955px;width:200px;height:21px;background:#e1e1e1;border:1px solid #adadad"></div>
<div class="t" style="left:1778px;top:959px;font-size:11px;color:#000">Usuń Kształt</div>
<div class="a" style="left:1703px;top:984px;width:214px;height:23px;background:#f0f0f0"></div>
<div class="a" style="left:1703px;top:984px;width:71px;height:23px;background:#fff;border:1px solid #d9d9d9;border-top:none"></div>
<div class="t" style="left:1708px;top:988px;font-size:11.4px;color:#000">Biblioteka ...</div>
<div class="a" style="left:1774px;top:984px;width:72px;height:22px;border:1px solid #d9d9d9;border-top:none;border-left:none"></div>
<div class="t" style="left:1779px;top:988px;font-size:11.4px;color:#6d6d6d">Biblioteka ...</div>
<div class="a" style="left:1845px;top:984px;width:72px;height:22px;border:1px solid #d9d9d9;border-top:none"></div>
<div class="t" style="left:1850px;top:988px;font-size:11.4px;color:#6d6d6d">Biblioteka ...</div>
<div class="a" style="left:1920px;top:23px;width:2px;height:1017px;background:#fff"></div><div class="a" style="left:0;top:1008px;width:1920px;height:32px;background:#f0f0f0"></div>
<div class="t" style="left:2px;top:1017px;font-size:11.2px;color:#000">MT8050iE/MT8051iE (480 x 272)</div>
<div class="a" style="left:173px;top:1011px;width:2px;height:26px;background:#a5a5a5;border-right:1px solid #fff"></div>
<div class="a" style="left:388px;top:1011px;width:2px;height:26px;background:#a5a5a5;border-right:1px solid #fff"></div>
<div class="a" style="left:1183px;top:1011px;width:2px;height:26px;background:#a5a5a5;border-right:1px solid #fff"></div>
<div class="a" style="left:1293px;top:1011px;width:2px;height:26px;background:#a5a5a5;border-right:1px solid #fff"></div>
<div class="a" style="left:1403px;top:1011px;width:2px;height:26px;background:#a5a5a5;border-right:1px solid #fff"></div>
<div class="a" style="left:1488px;top:1011px;width:2px;height:26px;background:#a5a5a5;border-right:1px solid #fff"></div>
<div class="a" style="left:1574px;top:1011px;width:2px;height:26px;background:#a5a5a5;border-right:1px solid #fff"></div>
<div class="a" style="left:1604px;top:1011px;width:2px;height:26px;background:#a5a5a5;border-right:1px solid #fff"></div>
<div class="a" style="left:1642px;top:1011px;width:2px;height:26px;background:#a5a5a5;border-right:1px solid #fff"></div>
<div class="a" style="left:1685px;top:1011px;width:2px;height:26px;background:#a5a5a5;border-right:1px solid #fff"></div>
<div class="a" style="left:1728px;top:1011px;width:2px;height:26px;background:#a5a5a5;border-right:1px solid #fff"></div>
<div class="t" style="left:1412px;top:1017px;font-size:11.2px;color:#000">X = 23</div>
<div class="t" style="left:1497px;top:1017px;font-size:11.5px;color:#000">Y = -119</div>
<div class="t" style="left:1613px;top:1017px;font-size:11.2px;color:#8c8c8c">CAP</div>
<div class="t" style="left:1651px;top:1017px;font-size:11.2px;color:#8c8c8c">NUM</div>
<div class="t" style="left:1694px;top:1017px;font-size:11.2px;color:#8c8c8c">SCRL</div>
<div class="t" style="left:1736px;top:1017px;font-size:11.2px;color:#000">110 %</div>
<svg class="a" style="left:0;top:0" width="1922" height="1040"><path d="M1774 1024.5H1780" stroke="#999"/><path d="M1886 1024.5H1893M1889.5 1021V1028" stroke="#999"/><rect x="1782" y="1024" width="100" height="3" fill="#e6e6e6" stroke="#d0d0d0" stroke-width="0.5"/><path d="M1787.5 1014V1019" stroke="#222" stroke-width="0.9"/><path d="M1795.6 1014V1019" stroke="#222" stroke-width="0.9"/><path d="M1803.7 1014V1019" stroke="#222" stroke-width="0.9"/><path d="M1811.8 1014V1019" stroke="#222" stroke-width="0.9"/><path d="M1819.9 1014V1019" stroke="#222" stroke-width="0.9"/><path d="M1828.0 1014V1019" stroke="#222" stroke-width="0.9"/><path d="M1836.1 1014V1019" stroke="#222" stroke-width="0.9"/><path d="M1844.2 1014V1019" stroke="#222" stroke-width="0.9"/><path d="M1852.3 1014V1019" stroke="#222" stroke-width="0.9"/><path d="M1860.4 1014V1019" stroke="#222" stroke-width="0.9"/><path d="M1868.5 1014V1019" stroke="#222" stroke-width="0.9"/><path d="M1876.6 1014V1019" stroke="#222" stroke-width="0.9"/><path d="M1839 1022L1844.5 1016.5L1850 1022V1037H1839Z" fill="#0078d7"/><path d="M1900.5 1020V1017.5H1904M1911 1017.5H1914.5V1020M1914.5 1028V1031H1911M1904 1031H1900.5V1028" fill="none" stroke="#777" stroke-width="1.1"/><path d="M1907.5 1019V1029.5M1902.5 1024.2H1912.5" stroke="#4a96e8" stroke-width="1.2"/><path d="M1905.5 1020.5L1907.5 1017.5L1909.5 1020.5ZM1905.5 1028L1907.5 1031L1909.5 1028ZM1904 1022.2L1901 1024.2L1904 1026.2ZM1911 1022.2L1914 1024.2L1911 1026.2Z" fill="#4a96e8"/><circle cx="1907.5" cy="1024.2" r="1.4" fill="#e8883a"/></svg></body></html>
